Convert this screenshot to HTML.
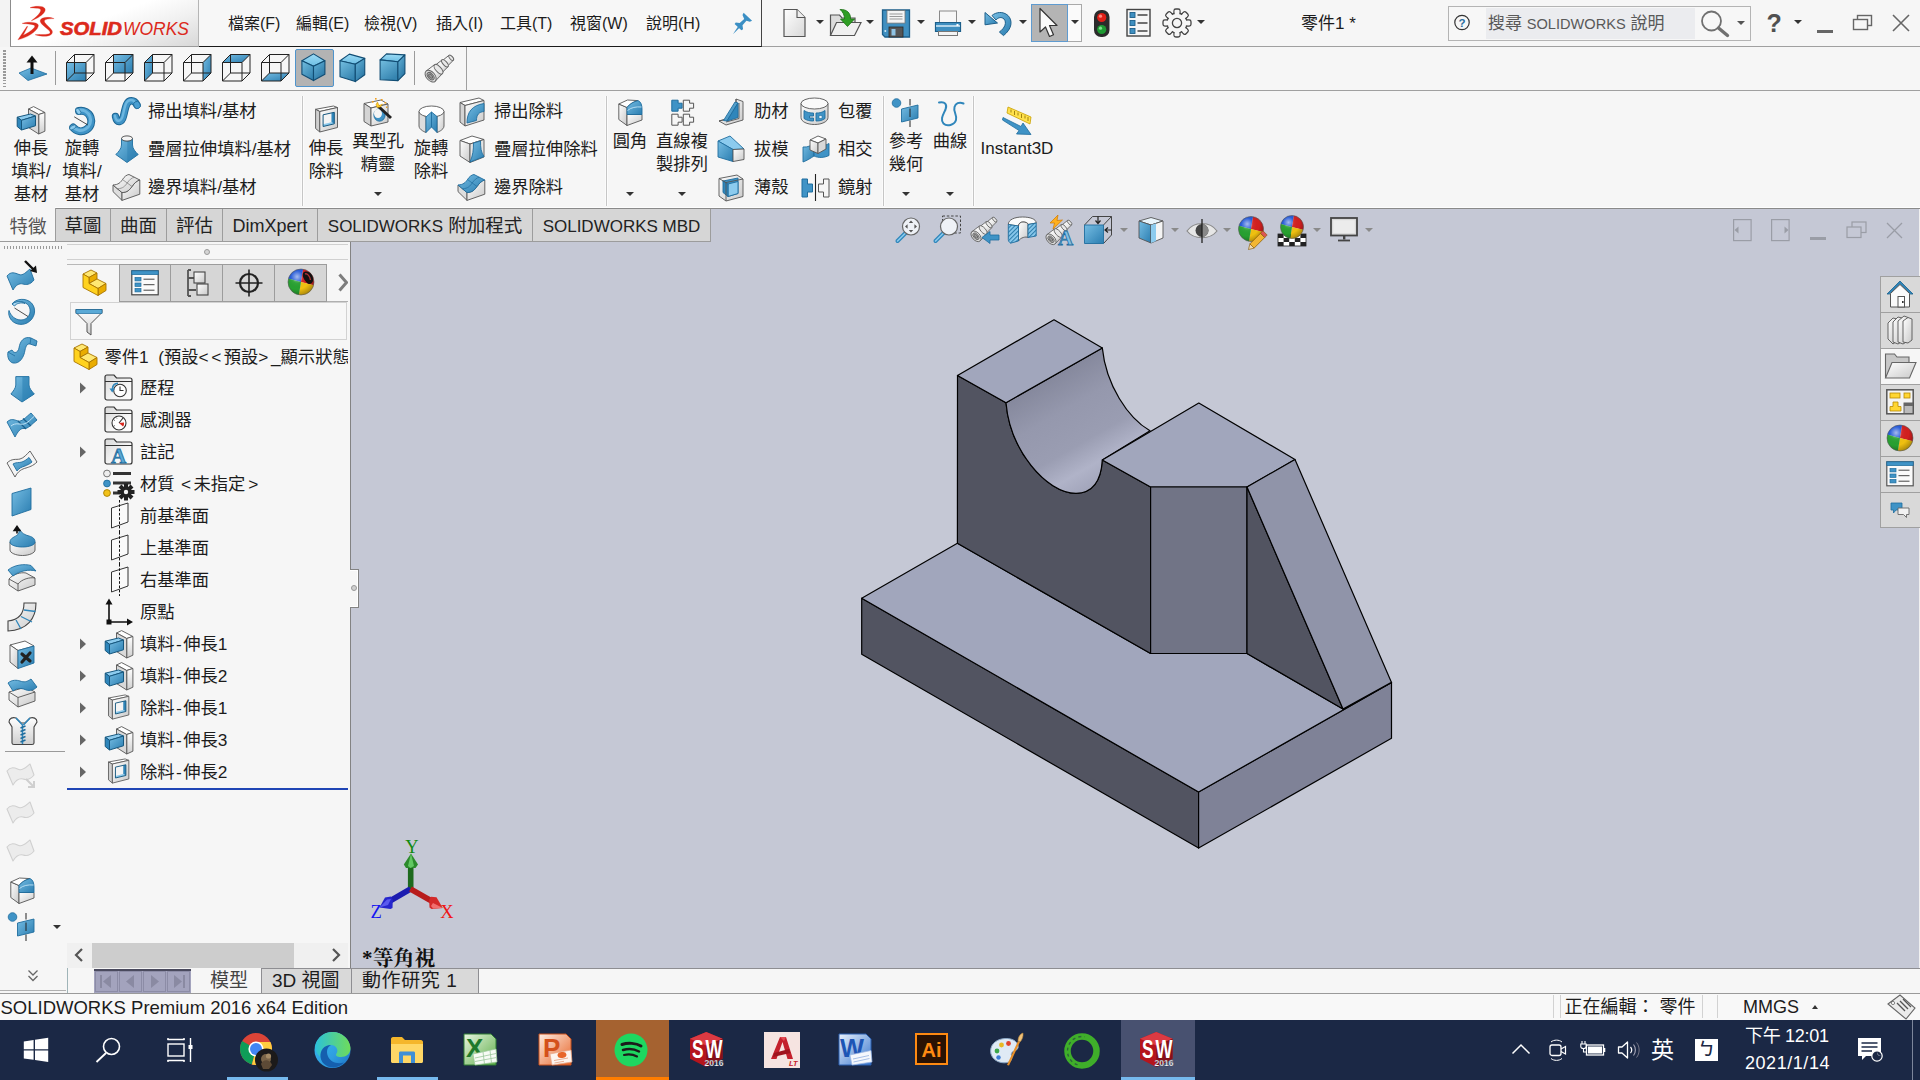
<!DOCTYPE html>
<html lang="zh-Hant">
<head>
<meta charset="utf-8">
<title>SOLIDWORKS</title>
<style>
*{box-sizing:border-box;margin:0;padding:0}
html,body{width:1920px;height:1080px;overflow:hidden;background:#f6f6f6}
body{position:relative;font-family:"Liberation Sans","Noto Sans CJK TC",sans-serif;color:#1c1c1c;font-size:17px}
.abs{position:absolute}
.t{position:absolute;white-space:nowrap;line-height:24px;height:24px}
.c{transform:translateX(-50%);text-align:center}
svg{position:absolute;overflow:visible}
.dd{position:absolute;width:0;height:0;border-left:4px solid transparent;border-right:4px solid transparent;border-top:4.5px solid #333}
/* title bar */
#logo{left:10px;top:0;width:189px;height:47px;background:linear-gradient(160deg,#ffffff 0%,#ffffff 45%,#f0f0f0 70%,#d8d8d8 100%);border-left:1px solid #8c8c8c;border-bottom:1px solid #9a9a9a;border-right:1px solid #b5b5b5}
#leftedge{left:0;top:0;width:10px;height:47px;background:#f3f3f3}
#menubar{left:199px;top:0;width:563px;height:47px;background:#f7f7f7;border-bottom:1.5px solid #1a1a1a;border-right:1.5px solid #444}
.menu{font-size:16px;top:12px}
#titleline{left:762px;top:46px;width:1158px;height:1px;background:#a0a0a0}
#viewbarline{left:0;top:90px;width:1920px;height:1px;background:#a0a0a0}
#viewbar-r{left:466px;top:47px;width:1px;height:43px;background:#a0a0a0}
.sep{position:absolute;width:1px;background:#c6c6c6;box-shadow:1px 0 0 #fcfcfc,-1px 0 0 #fbfbfb}
/* ribbon */
.rb{font-size:17px}
/* tabs */
.tab{position:absolute;top:209px;height:33px;background:#d6d6d6;border:1px solid #9c9c9c;border-top:none;border-left:none;font-size:18.5px;line-height:33px;white-space:nowrap;text-align:center;color:#222}
/* viewport */
#viewport{left:351px;top:209px;width:1569px;height:759px;background:#c5c8d5}
/* tree */
.tr{font-size:17.3px;left:140px}
/* taskbar */
#taskbar{left:0;top:1020px;width:1920px;height:60px;background:#1b2845}
</style>
</head>
<body>

<!-- title -->
<div id="leftedge" class="abs"></div>
<div id="logo" class="abs"></div>
<svg style="left:0;top:0" width="200" height="47" viewBox="0 0 200 47">
<g fill="#dc2a1c" stroke="#dc2a1c" stroke-width="0.3" stroke-linejoin="round">
<path d="M30,7.7 C33,6.3 39,5.8 42.4,6.8 C44.5,7.5 45.5,8.8 45.1,10.5 C44.5,13 41,16 37.3,18 C35.5,19 33,20.2 31.3,20.7 C33.5,19.2 35.5,17.5 37,16 C39.5,13.5 41,11.5 40.7,9.8 C40.3,8.5 38,8.3 37,8.2 C34.5,8 32,7.9 30,7.7 Z"/>
<path d="M22.1,23.4 C25,22.3 31,21.5 35.6,23 C37.5,23.7 38.6,24.5 38.3,26 C37.8,29 34.5,31.8 31.3,34.1 C27,37 22,38.8 17.9,39.8 L27,26.2 L27.7,26.5 L23.2,35.3 C27,33.8 31.5,30.5 33.9,28.1 C35,26.8 35,25.8 34.2,25.2 C32.5,24.2 28,24 22.1,23.4 Z"/>
<path d="M54.1,18.6 C51,17.3 46,16.8 42.8,18.1 C40.5,19 39.8,20.5 40.4,22 C41.5,24.5 45,27 48.3,29.8 C50,31.3 50.5,32.5 49.8,33.3 C48.5,34.6 44,34.6 35.1,34.7 C41,36.5 47,36.8 50,35.3 C52.5,34 52.8,32 52,30.5 C50.5,27.8 46.5,25 44.8,22.5 C44,21.2 44.3,20.2 45.8,19.6 C48,18.8 51,18.7 54.1,18.6 Z"/>
</g>
<text x="60" y="35.3" font-family="'Liberation Sans',sans-serif" font-size="18.5" font-style="italic" fill="#dc2a1c"><tspan font-weight="700" stroke="#dc2a1c" stroke-width="0.6" textLength="62" lengthAdjust="spacingAndGlyphs">SOLID</tspan><tspan dx="1" textLength="66" lengthAdjust="spacingAndGlyphs">WORKS</tspan></text>
</svg>
<div id="menubar" class="abs"></div>
<div class="t menu" style="left:228px">檔案(F)</div>
<div class="t menu" style="left:296px">編輯(E)</div>
<div class="t menu" style="left:364px">檢視(V)</div>
<div class="t menu" style="left:436px">插入(I)</div>
<div class="t menu" style="left:500px">工具(T)</div>
<div class="t menu" style="left:570px">視窗(W)</div>
<div class="t menu" style="left:646px">說明(H)</div>
<svg style="left:729.5px;top:10px" width="25" height="27" viewBox="0 0 22 24"><g fill="#3b8fc4"><path d="M12,2.5 L19.5,9.5 L17.5,10.5 L14.5,9.5 L11,13.5 L11.5,17 L10,18 L4,12.5 L5,11 L8.5,11.5 L12.5,8 L11,4.5 Z"/><path d="M7.3,14.2 L8.6,15.5 L2.5,21.5 Z"/></g></svg>
<div id="titleline" class="abs"></div>
<svg style="left:780px;top:6px" width="30" height="34" viewBox="0 0 30 34"><defs><linearGradient id="gpaper" x1="0" y1="0" x2="1" y2="1"><stop offset="0" stop-color="#ffffff"/><stop offset="1" stop-color="#d8d8d8"/></linearGradient></defs><path d="M4,3.5 h13 l8,8 v19 h-21 z" fill="url(#gpaper)" stroke="#555" stroke-width="1.2"/><path d="M17,3.5 v8 h8" fill="#eee" stroke="#555" stroke-width="1.1"/></svg>
<div class="dd" style="left:815.5px;top:20px;border-top-color:#333"></div>
<svg style="left:828px;top:6px" width="36" height="34" viewBox="0 0 36 34"><path d="M2.5,29.5 V9 h9 l2.5,3 h13 v5" fill="#dcdcdc" stroke="#555" stroke-width="1.2"/><path d="M2.5,29.5 L8.5,16.5 H33 L26.5,29.5 Z" fill="#f0f0f0" stroke="#555" stroke-width="1.2"/><path d="M12,3.5 C19,3 23,7.5 22.5,13 L26.5,13 L19.5,20.5 L12.5,13 L16.5,13 C16.5,9 15,6 12,3.5 Z" fill="#2f9e24" stroke="#1c7014" stroke-width="0.8"/></svg>
<div class="dd" style="left:866px;top:20px;border-top-color:#333"></div>
<svg style="left:880px;top:6px" width="32" height="34" viewBox="0 0 32 34"><path d="M2.5,4 h27 v27 h-24.5 l-2.5,-2.5 z" fill="#3f8fc0" stroke="#1d5f8a" stroke-width="1.3"/><rect x="7" y="4.6" width="18" height="12.5" fill="#f4f4f4" stroke="#777" stroke-width="0.8"/><path d="M9.5,8 h13 M9.5,10.5 h13 M9.5,13 h13" stroke="#999" stroke-width="1"/><rect x="9" y="21" width="14" height="10" fill="#555" stroke="#2a2a2a" stroke-width="0.8"/><rect x="11.5" y="23" width="4" height="6.5" fill="#8fc3e3"/><circle cx="5.3" cy="25" r="1" fill="#cfe6f4"/></svg>
<div class="dd" style="left:917px;top:20px;border-top-color:#333"></div>
<svg style="left:931.5px;top:4.8px" width="32" height="34" viewBox="0 0 32 34"><rect x="7.5" y="6" width="17" height="12" fill="#f7f7f7" stroke="#8a8a8a" stroke-width="1"/><path d="M3.5,17.5 h25 v9 h-25 z" fill="#3f8fc0" stroke="#1d5f8a" stroke-width="1.2"/><path d="M4,21 h24" stroke="#cfe6f4" stroke-width="1.6"/><rect x="6.5" y="26.5" width="19" height="4" fill="#f4f4f4" stroke="#777" stroke-width="1"/><rect x="24.5" y="19" width="2" height="2" fill="#fff"/></svg>
<div class="dd" style="left:968px;top:20px;border-top-color:#333"></div>
<svg style="left:983px;top:6px" width="32" height="34" viewBox="0 0 32 34"><g fill="url(#gb)" stroke="#1d5f8a" stroke-width="1" stroke-linejoin="round"><path d="M9,9.5 C13,6 20,5 25,9.5 C30,14.5 29,23 20.5,29.6 L16.4,26 C22,22 24,16.5 21,13 C18.5,10.5 15,11.5 13,14 Z"/><path d="M2,6.5 L2,18.8 L14.5,17 Z"/></g></svg>
<div class="dd" style="left:1019px;top:20px;border-top-color:#333"></div>
<div class="abs" style="left:1031px;top:4px;width:37px;height:38px;background:#b4b4b4;border:1px solid #5f9bd0"></div>
<div class="abs" style="left:1068px;top:4px;width:14px;height:38px;background:#fafafa;border:1px solid #a9a9a9;border-left:none"></div>
<svg style="left:1031px;top:4px" width="37" height="38" viewBox="0 0 37 38"><path d="M9,4.5 L9,28 L14.5,23 L18.5,32.5 L22.5,30.8 L18.5,21.5 L26,21.5 Z" fill="#fafafa" stroke="#333" stroke-width="1.2" stroke-linejoin="round"/></svg>
<div class="dd" style="left:1071px;top:20px;border-top-color:#333"></div>
<svg style="left:1092px;top:9px" width="20" height="30" viewBox="0 0 20 30"><rect x="2" y="1" width="15.5" height="27" rx="7" fill="#2b2b2b"/><circle cx="9.7" cy="8.5" r="4.6" fill="#e02018"/><circle cx="8.5" cy="7.2" r="1.6" fill="#ff8a80"/><circle cx="9.7" cy="20.5" r="4.6" fill="#1e9a32"/><circle cx="8.5" cy="19.2" r="1.6" fill="#7fe08f"/></svg>
<svg style="left:1125px;top:8px" width="28" height="30" viewBox="0 0 28 30"><rect x="2" y="1.5" width="23" height="26.5" fill="#f6f6f6" stroke="#444" stroke-width="1.4"/><g fill="#3f8fc0" stroke="#1d5f8a" stroke-width="0.9"><rect x="5" y="4.5" width="5" height="5"/><rect x="5" y="12.5" width="5" height="5"/><rect x="5" y="20.5" width="5" height="5"/></g><path d="M12.5,7 h10 M12.5,15 h10 M12.5,23 h10" stroke="#444" stroke-width="1.3"/></svg>
<svg style="left:1162px;top:8px" width="30" height="30" viewBox="-15 -15 30 30"><rect x="-3" y="-14" width="6" height="6" rx="1.8" fill="#f6f6f6" stroke="#444" stroke-width="1.3" transform="rotate(0.0)"/><rect x="-3" y="-14" width="6" height="6" rx="1.8" fill="#f6f6f6" stroke="#444" stroke-width="1.3" transform="rotate(45.0)"/><rect x="-3" y="-14" width="6" height="6" rx="1.8" fill="#f6f6f6" stroke="#444" stroke-width="1.3" transform="rotate(90.0)"/><rect x="-3" y="-14" width="6" height="6" rx="1.8" fill="#f6f6f6" stroke="#444" stroke-width="1.3" transform="rotate(135.0)"/><rect x="-3" y="-14" width="6" height="6" rx="1.8" fill="#f6f6f6" stroke="#444" stroke-width="1.3" transform="rotate(180.0)"/><rect x="-3" y="-14" width="6" height="6" rx="1.8" fill="#f6f6f6" stroke="#444" stroke-width="1.3" transform="rotate(225.0)"/><rect x="-3" y="-14" width="6" height="6" rx="1.8" fill="#f6f6f6" stroke="#444" stroke-width="1.3" transform="rotate(270.0)"/><rect x="-3" y="-14" width="6" height="6" rx="1.8" fill="#f6f6f6" stroke="#444" stroke-width="1.3" transform="rotate(315.0)"/><circle r="10" fill="#f6f6f6" stroke="#444" stroke-width="1.3"/><rect x="-2.3" y="-12.6" width="4.6" height="5" fill="#f6f6f6" transform="rotate(0.0)"/><rect x="-2.3" y="-12.6" width="4.6" height="5" fill="#f6f6f6" transform="rotate(45.0)"/><rect x="-2.3" y="-12.6" width="4.6" height="5" fill="#f6f6f6" transform="rotate(90.0)"/><rect x="-2.3" y="-12.6" width="4.6" height="5" fill="#f6f6f6" transform="rotate(135.0)"/><rect x="-2.3" y="-12.6" width="4.6" height="5" fill="#f6f6f6" transform="rotate(180.0)"/><rect x="-2.3" y="-12.6" width="4.6" height="5" fill="#f6f6f6" transform="rotate(225.0)"/><rect x="-2.3" y="-12.6" width="4.6" height="5" fill="#f6f6f6" transform="rotate(270.0)"/><rect x="-2.3" y="-12.6" width="4.6" height="5" fill="#f6f6f6" transform="rotate(315.0)"/><circle r="4.6" fill="#f6f6f6" stroke="#444" stroke-width="1.3"/></svg>
<div class="dd" style="left:1197px;top:20px;border-top-color:#333"></div>
<div class="t" style="left:1301px;top:12px;font-size:17px">零件1 *</div>
<div class="abs" style="left:1448px;top:6px;width:303px;height:35px;background:#f7f7f7;border:1px solid #b4b4b4"></div>
<div class="abs" style="left:1486px;top:8px;width:209px;height:31px;background:#ebecef"></div>
<svg style="left:1453px;top:13px" width="18" height="18" viewBox="0 0 18 18"><circle cx="9" cy="9.5" r="7.2" fill="none" stroke="#333" stroke-width="1.2"/><text x="9" y="13.6" text-anchor="middle" font-family="'Liberation Sans',sans-serif" font-weight="700" font-size="11.5" fill="#2b6ea0">?</text></svg>
<div class="t" style="left:1488px;top:12px;font-size:17px;color:#595959">搜尋 <span style="font-size:14.6px">SOLIDWORKS</span> 說明</div>
<svg style="left:1698px;top:9px" width="36" height="30" viewBox="0 0 36 30"><circle cx="13.5" cy="12" r="9.5" fill="#f7f7f7" stroke="#707070" stroke-width="1.8"/><path d="M20.5,19 L29.5,26.5" stroke="#707070" stroke-width="3.4" stroke-linecap="round"/></svg>
<div class="dd" style="left:1737px;top:21px;border-top-color:#555"></div>
<div class="t" style="left:1766.5px;top:11px;font-size:25px;font-weight:700;color:#505050">?</div>
<div class="dd" style="left:1794px;top:20px;border-top-color:#333"></div>
<div class="abs" style="left:1816.5px;top:29.5px;width:16.5px;height:3px;background:#666"></div>
<svg style="left:1851px;top:13px" width="24" height="20" viewBox="0 0 24 20"><rect x="6.5" y="2.5" width="14" height="10" fill="none" stroke="#666" stroke-width="1.4"/><rect x="2.5" y="6.5" width="14" height="10" fill="#f6f6f6" stroke="#666" stroke-width="1.4"/></svg>
<svg style="left:1891px;top:13px" width="20" height="20" viewBox="0 0 20 20"><path d="M2,2 L18,18 M18,2 L2,18" stroke="#666" stroke-width="1.6"/></svg>
<!-- viewbar -->
<svg width="0" height="0" style="left:0;top:0"><defs>
<linearGradient id="gb" x1="0" y1="0" x2="1" y2="1"><stop offset="0" stop-color="#76bde3"/><stop offset="1" stop-color="#2a7db0"/></linearGradient>
<linearGradient id="gbv" x1="0" y1="0" x2="0" y2="1"><stop offset="0" stop-color="#7cc4ea"/><stop offset="1" stop-color="#2f86bb"/></linearGradient>
<linearGradient id="gg" x1="0" y1="0" x2="1" y2="1"><stop offset="0" stop-color="#ffffff"/><stop offset="1" stop-color="#c9c9c9"/></linearGradient>
<linearGradient id="ggv" x1="0" y1="0" x2="0" y2="1"><stop offset="0" stop-color="#ffffff"/><stop offset="1" stop-color="#cfcfcf"/></linearGradient>
<linearGradient id="gfold" x1="0" y1="0" x2="1" y2="1"><stop offset="0" stop-color="#d8d8d8"/><stop offset="0.6" stop-color="#f6f6f6"/><stop offset="1" stop-color="#ffffff"/></linearGradient>
<linearGradient id="gscope" x1="0" y1="0" x2="1" y2="1"><stop offset="0" stop-color="#ffffff"/><stop offset="0.55" stop-color="#ededed"/><stop offset="1" stop-color="#b5b5b5"/></linearGradient>
<linearGradient id="gy" x1="0" y1="0" x2="1" y2="1"><stop offset="0" stop-color="#ffe14d"/><stop offset="1" stop-color="#e8a800"/></linearGradient>
<radialGradient id="gball" cx="0.35" cy="0.3" r="0.8"><stop offset="0" stop-color="#fff" stop-opacity="0.6"/><stop offset="0.3" stop-color="#fff" stop-opacity="0.05"/><stop offset="0.6" stop-color="#000" stop-opacity="0"/><stop offset="1" stop-color="#000" stop-opacity="0.35"/></radialGradient>
</defs></svg>
<div class="abs" style="left:3px;top:50px;width:3px;height:38px;background:repeating-linear-gradient(180deg,#9a9a9a 0 1.5px,transparent 1.5px 3px)"></div>
<svg style="left:16px;top:50px" width="34" height="36" viewBox="0 0 34 36"><path d="M3,23 L15,18 L31,24 L12,30.5 Z" fill="url(#gb)" stroke="#1f6d9e" stroke-width="0.8"/><path d="M16,24 V11" stroke="#111" stroke-width="3"/><path d="M16,5.5 L21.5,12.5 H10.5 Z" fill="#111"/></svg>
<div class="sep" style="left:55px;top:51px;height:34px;box-shadow:none;background:#9a9a9a"></div>
<svg style="left:64px;top:47px" width="34" height="42" viewBox="0 0 34 42"><path d="M2.5,15.5 H22 V34 H2.5 Z" fill="url(#gb)"/><g fill="none" stroke="#222" stroke-width="1"><path d="M2.5,15.5 H22 V34 H2.5 Z"/><path d="M10.5,7.5 H30 V26 H10.5 Z"/><path d="M2.5,15.5 l8,-8 M22,15.5 l8,-8 M2.5,34 l8,-8 M22,34 l8,-8"/></g></svg>
<svg style="left:103px;top:47px" width="34" height="42" viewBox="0 0 34 42"><path d="M10.5,7.5 H30 V26 H10.5 Z" fill="url(#gb)"/><g fill="none" stroke="#222" stroke-width="1"><path d="M2.5,15.5 H22 V34 H2.5 Z"/><path d="M10.5,7.5 H30 V26 H10.5 Z"/><path d="M2.5,15.5 l8,-8 M22,15.5 l8,-8 M2.5,34 l8,-8 M22,34 l8,-8"/></g></svg>
<svg style="left:142px;top:47px" width="34" height="42" viewBox="0 0 34 42"><path d="M2.5,15.5 L10.5,7.5 V26 L2.5,34 Z" fill="url(#gb)"/><g fill="none" stroke="#222" stroke-width="1"><path d="M2.5,15.5 H22 V34 H2.5 Z"/><path d="M10.5,7.5 H30 V26 H10.5 Z"/><path d="M2.5,15.5 l8,-8 M22,15.5 l8,-8 M2.5,34 l8,-8 M22,34 l8,-8"/></g></svg>
<svg style="left:181px;top:47px" width="34" height="42" viewBox="0 0 34 42"><path d="M22,15.5 L30,7.5 V26 L22,34 Z" fill="url(#gb)"/><g fill="none" stroke="#222" stroke-width="1"><path d="M2.5,15.5 H22 V34 H2.5 Z"/><path d="M10.5,7.5 H30 V26 H10.5 Z"/><path d="M2.5,15.5 l8,-8 M22,15.5 l8,-8 M2.5,34 l8,-8 M22,34 l8,-8"/></g></svg>
<svg style="left:220px;top:47px" width="34" height="42" viewBox="0 0 34 42"><path d="M2.5,15.5 L10.5,7.5 H30 L22,15.5 Z" fill="url(#gb)"/><g fill="none" stroke="#222" stroke-width="1"><path d="M2.5,15.5 H22 V34 H2.5 Z"/><path d="M10.5,7.5 H30 V26 H10.5 Z"/><path d="M2.5,15.5 l8,-8 M22,15.5 l8,-8 M2.5,34 l8,-8 M22,34 l8,-8"/></g></svg>
<svg style="left:259px;top:47px" width="34" height="42" viewBox="0 0 34 42"><path d="M2.5,34 L10.5,26 H30 L22,34 Z" fill="url(#gb)"/><g fill="none" stroke="#222" stroke-width="1"><path d="M2.5,15.5 H22 V34 H2.5 Z"/><path d="M10.5,7.5 H30 V26 H10.5 Z"/><path d="M2.5,15.5 l8,-8 M22,15.5 l8,-8 M2.5,34 l8,-8 M22,34 l8,-8"/></g></svg>
<div class="abs" style="left:295px;top:49px;width:39px;height:38px;background:#b3b3b3;border:1px solid #4f94cc;border-radius:2px"></div>
<svg style="left:0;top:0" width="470" height="92" viewBox="0 0 470 92"><defs><linearGradient id="ct" x1="0" y1="0" x2="0" y2="1"><stop offset="0" stop-color="#9ddcf6"/><stop offset="1" stop-color="#6cbde3"/></linearGradient><linearGradient id="cl" x1="0" y1="0" x2="0.6" y2="1"><stop offset="0" stop-color="#74bee0"/><stop offset="1" stop-color="#3584b0"/></linearGradient><linearGradient id="cr" x1="0" y1="0" x2="0.6" y2="1"><stop offset="0" stop-color="#66b4da"/><stop offset="1" stop-color="#2a76a3"/></linearGradient></defs>
<g stroke="#114d74" stroke-width="1.1" stroke-linejoin="round"><path d="M313.5,53.9 L324.9,60.8 L313.5,66.3 L301.9,60.8 Z" fill="url(#ct)"/><path d="M301.9,60.8 L313.5,66.3 V80.6 L301.9,74.2 Z" fill="url(#cl)"/><path d="M324.9,60.8 L313.5,66.3 V80.6 L324.9,74.2 Z" fill="url(#cr)"/>
<path d="M340,60.8 L349.4,54.1 L364.75,58.4 L355.3,64.3 Z" fill="url(#ct)"/><path d="M340,60.8 L355.3,64.3 V81.6 L340,76.7 Z" fill="url(#cl)"/><path d="M355.3,64.3 L364.75,58.4 V74.7 L355.3,81.6 Z" fill="url(#cr)"/>
<path d="M380.1,59.9 L386.5,53.9 L404.9,54.9 L397.9,61.8 Z" fill="url(#ct)"/><path d="M380.1,59.9 L397.9,61.8 V80.6 L380.1,79.7 Z" fill="url(#cl)"/><path d="M397.9,61.8 L404.9,54.9 V73.7 L397.9,80.6 Z" fill="url(#cr)"/></g></svg>
<div class="sep" style="left:414px;top:51px;height:34px;box-shadow:none;background:#9a9a9a"></div>
<svg style="left:424px;top:51px" width="32" height="32" viewBox="0 0 29 29"><g transform="translate(0,2.5)" stroke="#666" stroke-width="0.9" stroke-linejoin="round"><path d="M16.8,6.1 L22.6,1.4 L26.6,5.9 L21.3,11.2 Z" fill="url(#gscope)"/><ellipse cx="24.6" cy="3.6" rx="1.4" ry="3.0" transform="rotate(-41.8 24.6 3.6)" fill="#e8e8e8"/><path d="M10.0,10.5 L16.3,5.6 L21.8,11.7 L16.1,17.4 Z" fill="url(#gscope)"/><ellipse cx="19.0" cy="8.6" rx="1.8" ry="4.1" transform="rotate(-41.8 19.0 8.6)" fill="#e8e8e8"/><path d="M1.9,15.7 L9.5,9.9 L16.7,18.0 L10.1,24.9 Z" fill="url(#gscope)"/><ellipse cx="13.1" cy="14.0" rx="2.4" ry="5.4" transform="rotate(-41.8 13.1 14.0)" fill="#e8e8e8"/><ellipse cx="6.0" cy="20.3" rx="3.9" ry="6.2" transform="rotate(-41.8 6.0 20.3)" fill="#dcdcdc"/><ellipse cx="6.0" cy="20.3" rx="2.3" ry="3.9" transform="rotate(-41.8 6.0 20.3)" fill="#bdbdbd"/><ellipse cx="6.0" cy="20.3" rx="1.2" ry="2.3" transform="rotate(-41.8 6.0 20.3)" fill="#999"/></g></svg>
<div id="viewbar-r" class="abs"></div>
<div id="viewbarline" class="abs"></div>
<!-- viewport -->
<div id="viewport" class="abs"></div>
<div class="abs" style="left:349px;top:242px;width:1px;height:726px;background:#ffffff"></div>
<div class="abs" style="left:350px;top:242px;width:1px;height:726px;background:#838383"></div>
<div class="abs" style="left:1919px;top:209px;width:1px;height:759px;background:#f0f0f0"></div>
<svg id="model" width="1569" height="759" viewBox="351 209 1569 759" style="left:351px;top:209px">
<defs>
<linearGradient id="cyl" gradientUnits="userSpaceOnUse" x1="1030" y1="375" x2="1098" y2="493">
<stop offset="0" stop-color="#808397"/><stop offset="0.35" stop-color="#9598ad"/><stop offset="0.62" stop-color="#9a9db2"/><stop offset="0.8" stop-color="#b0b3c8"/><stop offset="1" stop-color="#9da0b6"/>
</linearGradient>
</defs>
<g stroke="#000" stroke-width="1.2" stroke-linejoin="round">
<polygon points="861.7,598.2 861.7,654.2 1198.6,848.1 1198.6,792.1" fill="#525461"/>
<polygon points="1198.6,792.1 1198.6,848.1 1391.5,738.3 1391.5,682.4" fill="#7f8297"/>
<polygon points="861.7,598.2 957.4,543.3 1150.6,653.5 1247,653.5 1343,709 1391.5,682.4 1198.6,792.1" fill="#a1a6bc"/>
<path d="M957.5,375.4 L1006,402.7 C1010,450 1046,493 1076,493.3 C1092,493 1101,482 1102.3,460 L1150.6,487 L1150.6,653.5 L957.4,543.3 Z" fill="#525461"/>
<path d="M1006,402.7 L1102.3,347.9 C1106,385 1128,418 1150,430.8 L1102.3,460 C1101,482 1092,493 1076,493.3 C1046,493 1010,450 1006,402.7 Z" fill="url(#cyl)"/>
<polygon points="957.5,375.4 1054,319.8 1102.3,347.9 1006,402.7" fill="#a1a6bc"/>
<polygon points="1102.3,460 1198.8,403 1295,459.5 1247,487 1150.6,487" fill="#a1a6bc"/>
<polygon points="1150.6,487 1247,487 1247,653.5 1150.6,653.5" fill="#717486"/>
<polygon points="1247,487 1343,709 1247,653.5" fill="#525461"/>
<polygon points="1247,487 1295,459.5 1391.5,682.4 1343,709" fill="#9094a9"/>
</g>
<g>
<line x1="410.7" y1="889" x2="410.7" y2="866" stroke="#1e6a1e" stroke-width="5.6"/>
<polygon points="411,853.5 418,864.5 415.5,868 406,868 403.8,864.5" fill="#2c8a2c"/>
<polygon points="411,853.5 414,866 410.5,868 408,866" fill="#62c862"/>
<line x1="410.5" y1="889" x2="389" y2="901.5" stroke="#1c1cb0" stroke-width="5.6"/>
<polygon points="379.5,907.5 385,897.5 391,896.5 392.8,900 392.5,908 390.5,909" fill="#2626cc"/>
<polygon points="379.5,907.5 387,899.5 391,899 388,905" fill="#5a5aee"/>
<line x1="410.5" y1="889" x2="432.5" y2="901.5" stroke="#b81c1c" stroke-width="5.6"/>
<polygon points="442.8,908 436.5,897.2 431,896.8 429.2,900 429.5,907.5 431.5,909" fill="#d42a2a"/>
<polygon points="442.8,908 433,903 431,906 433,908.5" fill="#f07070"/>
<text x="405.3" y="852.8" font-family="'Liberation Serif',serif" font-size="18.5" fill="#118a11">Y</text>
<text x="370.5" y="918" font-family="'Liberation Serif',serif" font-size="18.5" fill="#1515f0">Z</text>
<text x="440.3" y="918" font-family="'Liberation Serif',serif" font-size="18.5" fill="#f01515">X</text>
</g>
</svg>
<div class="t" style="left:362px;top:946px;font-family:'Liberation Serif','Noto Serif CJK SC',serif;font-size:21px;font-weight:700;color:#111;line-height:24px">*等角視</div>
<svg style="left:894px;top:215px" width="30" height="30" viewBox="0 0 30 30"><path d="M11.5,18 L3.5,26" stroke="#2f86bb" stroke-width="4" stroke-linecap="round"/><path d="M11.5,18 L3.5,26" stroke="#8ccbee" stroke-width="1.6" stroke-linecap="round"/><circle cx="17" cy="11.5" r="8.5" fill="#eef1f6" stroke="#666" stroke-width="1.2"/><path d="M17,5.5 l2.2,2.6 h-4.4 z M17,17.5 l2.2,-2.6 h-4.4 z M11,11.5 l2.6,-2.2 v4.4 z M23,11.5 l-2.6,-2.2 v4.4 z" fill="#555"/></svg>
<svg style="left:932px;top:215px" width="30" height="30" viewBox="0 0 30 30"><rect x="10.5" y="1" width="18" height="17" fill="none" stroke="#444" stroke-width="1" stroke-dasharray="2.5 1.8"/><path d="M11.5,18 L3.5,26" stroke="#2f86bb" stroke-width="4" stroke-linecap="round"/><path d="M11.5,18 L3.5,26" stroke="#8ccbee" stroke-width="1.6" stroke-linecap="round"/><circle cx="17" cy="11.5" r="8.5" fill="#eef1f6" stroke="#666" stroke-width="1.2"/></svg>
<svg style="left:969px;top:215px" width="32" height="30" viewBox="0 0 32 30"><g transform="translate(1,1)" stroke="#666" stroke-width="0.9" stroke-linejoin="round"><path d="M16.8,6.1 L22.6,1.4 L26.6,5.9 L21.3,11.2 Z" fill="url(#gscope)"/><ellipse cx="24.6" cy="3.6" rx="1.4" ry="3.0" transform="rotate(-41.8 24.6 3.6)" fill="#e8e8e8"/><path d="M10.0,10.5 L16.3,5.6 L21.8,11.7 L16.1,17.4 Z" fill="url(#gscope)"/><ellipse cx="19.0" cy="8.6" rx="1.8" ry="4.1" transform="rotate(-41.8 19.0 8.6)" fill="#e8e8e8"/><path d="M1.9,15.7 L9.5,9.9 L16.7,18.0 L10.1,24.9 Z" fill="url(#gscope)"/><ellipse cx="13.1" cy="14.0" rx="2.4" ry="5.4" transform="rotate(-41.8 13.1 14.0)" fill="#e8e8e8"/><ellipse cx="6.0" cy="20.3" rx="3.9" ry="6.2" transform="rotate(-41.8 6.0 20.3)" fill="#dcdcdc"/><ellipse cx="6.0" cy="20.3" rx="2.3" ry="3.9" transform="rotate(-41.8 6.0 20.3)" fill="#bdbdbd"/><ellipse cx="6.0" cy="20.3" rx="1.2" ry="2.3" transform="rotate(-41.8 6.0 20.3)" fill="#999"/></g><path d="M30,20 H21 V16.5 L13,22.5 L21,28.5 V25 H30 Z" fill="#3f93c6" stroke="#1f6d9e" stroke-width="0.8"/></svg>
<svg style="left:1007px;top:216px" width="31" height="29" viewBox="0 0 31 29"><defs><pattern id="hat" width="3" height="3" patternUnits="userSpaceOnUse" patternTransform="rotate(45)"><rect width="3" height="3" fill="#8ccbee"/><rect width="1.1" height="3" fill="#2f7fae"/></pattern></defs><g stroke="#555" stroke-width="0.9" stroke-linejoin="round"><path d="M1.3,8.5 C1.3,3.5 8,1 15.5,1 C23,1 29.2,3 29.2,7 L21,8.5 C21,6.8 18.5,6 16,6 C13.5,6 11.5,7.5 11.5,10 Z" fill="#fbfbfb"/><path d="M11.5,10 C11.5,7.5 13.5,6 16,6 C18.5,6 21,6.8 21,8.5 V21.5 C19,20.3 13.5,21.5 11.5,25 Z" fill="url(#gg)"/></g><g stroke="#1f6d9e" stroke-width="0.9" stroke-linejoin="round"><path d="M1.3,8.5 L11.5,10 V25 L3.5,27.2 C2,26 1.3,25 1.3,23.5 Z" fill="url(#hat)"/><path d="M21,8.5 L29.2,7 V20 L21,21.5 Z" fill="url(#hat)"/></g></svg>
<svg style="left:1045px;top:214px" width="32" height="32" viewBox="0 0 32 32"><g transform="translate(0,5)" stroke="#666" stroke-width="0.9" stroke-linejoin="round"><path d="M16.8,6.1 L22.6,1.4 L26.6,5.9 L21.3,11.2 Z" fill="url(#gscope)"/><ellipse cx="24.6" cy="3.6" rx="1.4" ry="3.0" transform="rotate(-41.8 24.6 3.6)" fill="#e8e8e8"/><path d="M10.0,10.5 L16.3,5.6 L21.8,11.7 L16.1,17.4 Z" fill="url(#gscope)"/><ellipse cx="19.0" cy="8.6" rx="1.8" ry="4.1" transform="rotate(-41.8 19.0 8.6)" fill="#e8e8e8"/><path d="M1.9,15.7 L9.5,9.9 L16.7,18.0 L10.1,24.9 Z" fill="url(#gscope)"/><ellipse cx="13.1" cy="14.0" rx="2.4" ry="5.4" transform="rotate(-41.8 13.1 14.0)" fill="#e8e8e8"/><ellipse cx="6.0" cy="20.3" rx="3.9" ry="6.2" transform="rotate(-41.8 6.0 20.3)" fill="#dcdcdc"/><ellipse cx="6.0" cy="20.3" rx="2.3" ry="3.9" transform="rotate(-41.8 6.0 20.3)" fill="#bdbdbd"/><ellipse cx="6.0" cy="20.3" rx="1.2" ry="2.3" transform="rotate(-41.8 6.0 20.3)" fill="#999"/></g><path d="M5,9 L13,1 L12,6.5 L17.5,6 L8,15 L9.5,9 Z" fill="#ffb01f" stroke="#d07800" stroke-width="0.7"/><text x="13" y="31" font-family="'Liberation Serif',serif" font-weight="700" font-size="21" fill="#7fbfe6" stroke="#1f6d9e" stroke-width="0.8">A</text></svg>
<svg style="left:1083px;top:215px" width="30" height="30" viewBox="0 0 30 30"><g fill="none" stroke="#444" stroke-width="1"><path d="M1.5,10 L9.5,1.5 H28.5 V20 L20.5,28.5"/><path d="M28.5,1.5 L20.5,10"/></g><path d="M1.5,10 H20.5 V28.5 H1.5 Z" fill="url(#gb)" stroke="#1f6d9e" stroke-width="0.9" stroke-linejoin="round"/><path d="M15,1.5 V8 M12.5,5.5 L15,8.5 L17.5,5.5 M28.5,15 H22.5 M25,12.5 L22,15 L25,17.5" fill="none" stroke="#222" stroke-width="1.2"/></svg>
<div class="dd" style="left:1120px;top:228px;border-top-color:#8a8a8a"></div>
<svg style="left:1138px;top:216px" width="26" height="28" viewBox="0 0 26 28"><g stroke="#555" stroke-width="0.9" stroke-linejoin="round"><path d="M1,5 L13,1.5 L25,5 L13,9 Z" fill="#e8f4fb"/><path d="M1,5 L13,9 V27 L1,22 Z" fill="url(#gb)"/><path d="M13,9 L25,5 V22 L13,27 Z" fill="#f4f4f4"/></g><path d="M13,9 L18,7.4 V25 L13,27 Z" fill="#8ccbee" stroke="none"/></svg>
<div class="dd" style="left:1171px;top:228px;border-top-color:#8a8a8a"></div>
<svg style="left:1186px;top:219px" width="32" height="24" viewBox="0 0 32 24"><path d="M1,12 C8,2 24,2 31,12 C24,21 8,21 1,12 Z" fill="#e6e6e6" stroke="#8a8a8a" stroke-width="1.2"/><circle cx="16" cy="11.5" r="6.5" fill="#444"/><path d="M16,5 A6.5,6.5 0 0 1 16,18 Z" fill="#888"/><path d="M16,0 V24" stroke="#222" stroke-width="1.3"/></svg>
<div class="dd" style="left:1223px;top:228px;border-top-color:#8a8a8a"></div>
<svg style="left:1237px;top:214px" width="34" height="34" viewBox="0 0 34 34"><g transform="translate(14,15)"><clipPath id="cb1415"><circle r="12.5"/></clipPath><g clip-path="url(#cb1415)"><path d="M0,0 L-13.750000000000002,-3.75 L-12.5,-15.0 L2.5,-15.0 Z" fill="#1f55d6"/><path d="M0,0 L2.5,-15.0 L15.0,-15.0 L15.0,3.75 Z" fill="#d21f1f"/><path d="M0,0 L15.0,3.75 L15.0,15.0 L-2.5,15.0 Z" fill="#f0c010"/><path d="M0,0 L-2.5,15.0 L-15.0,15.0 L-13.750000000000002,-3.75 Z" fill="#27a030"/></g><circle r="12.5" fill="url(#gball)" stroke="#555" stroke-width="0.6"/></g><g transform="translate(15,32) rotate(-45)"><rect x="0" y="-3" width="15" height="6" fill="#f2b632" stroke="#8a5a00" stroke-width="0.7"/><path d="M0,-3 L-5,0 L0,3 Z" fill="#f0d9b0" stroke="#8a5a00" stroke-width="0.6"/><rect x="15" y="-3" width="3.5" height="6" fill="#d55" stroke="#8a5a00" stroke-width="0.6"/></g></svg>
<svg style="left:1277px;top:214px" width="32" height="34" viewBox="0 0 32 34"><g transform="translate(1,20)"><rect width="28" height="12" fill="#fff" stroke="#222" stroke-width="0.8"/><path d="M0,0 h5.6 v4 h-5.6 z M11.2,0 h5.6 v4 h-5.6 z M22.4,0 h5.6 v4 h-5.6 z M5.6,4 h5.6 v4 h-5.6 z M16.8,4 h5.6 v4 h-5.6 z M0,8 h5.6 v4 h-5.6 z M11.2,8 h5.6 v4 h-5.6 z M22.4,8 h5.6 v4 h-5.6 z" fill="#222"/></g><g transform="translate(15,13)"><clipPath id="cb1513"><circle r="11.5"/></clipPath><g clip-path="url(#cb1513)"><path d="M0,0 L-12.65,-3.4499999999999997 L-11.5,-13.799999999999999 L2.3000000000000003,-13.799999999999999 Z" fill="#1f55d6"/><path d="M0,0 L2.3000000000000003,-13.799999999999999 L13.799999999999999,-13.799999999999999 L13.799999999999999,3.4499999999999997 Z" fill="#d21f1f"/><path d="M0,0 L13.799999999999999,3.4499999999999997 L13.799999999999999,13.799999999999999 L-2.3000000000000003,13.799999999999999 Z" fill="#f0c010"/><path d="M0,0 L-2.3000000000000003,13.799999999999999 L-13.799999999999999,13.799999999999999 L-12.65,-3.4499999999999997 Z" fill="#27a030"/></g><circle r="11.5" fill="url(#gball)" stroke="#555" stroke-width="0.6"/></g></svg>
<div class="dd" style="left:1313px;top:228px;border-top-color:#8a8a8a"></div>
<svg style="left:1330px;top:217px" width="28" height="26" viewBox="0 0 28 26"><rect x="1" y="1" width="26" height="17.5" fill="#d9d9d9" stroke="#444" stroke-width="1.8"/><rect x="3.2" y="3.2" width="21.6" height="13" fill="#ececec"/><path d="M13,19 h2.4 v3.5 h-2.4 z" fill="#444"/><path d="M8,23.5 h12" stroke="#444" stroke-width="1.8"/></svg>
<div class="dd" style="left:1365px;top:228px;border-top-color:#8a8a8a"></div>
<svg style="left:1733px;top:219px" width="20" height="23" viewBox="0 0 20 23"><rect x="0.6" y="0.6" width="17.5" height="21" fill="none" stroke="#9a9da6" stroke-width="1.2"/><path d="M1.5,11 L5.5,7.5 V14.5 Z" fill="#9a9da6"/></svg>
<svg style="left:1771px;top:219px" width="20" height="23" viewBox="0 0 20 23"><rect x="0.6" y="0.6" width="17.5" height="21" fill="none" stroke="#9a9da6" stroke-width="1.2"/><path d="M17.5,11 L13.5,7.5 V14.5 Z" fill="#9a9da6"/></svg>
<div class="abs" style="left:1810px;top:237px;width:16px;height:3px;background:#9a9da6"></div>
<svg style="left:1846px;top:221px" width="22" height="20" viewBox="0 0 22 20"><rect x="6" y="1" width="14" height="10.5" fill="none" stroke="#9a9da6" stroke-width="1.2"/><rect x="1" y="6" width="14" height="10.5" fill="#c5c8d5" stroke="#9a9da6" stroke-width="1.2"/></svg>
<svg style="left:1886px;top:222px" width="18" height="18" viewBox="0 0 18 18"><path d="M1,1 L16,16 M16,1 L1,16" stroke="#9a9da6" stroke-width="1.3"/></svg>
<div class="abs" style="left:350px;top:569px;width:9px;height:39px;background:#f6f6f6;border:1px solid #838383;border-left:none;box-shadow:inset -1px 0 0 #fff,inset 0 -1px 0 #fff,inset 0 1px 0 #fff"></div>
<div class="abs" style="left:351px;top:585px;width:6px;height:6px;border-radius:3px;background:#d0d0d0;border:1px solid #999"></div>
<div class="abs" style="left:1880px;top:276px;width:40px;height:37px;background:#d9d9d9;border:1px solid #a0a0a0;border-right:none"></div>
<div class="abs" style="left:1880px;top:312px;width:40px;height:37px;background:#d9d9d9;border:1px solid #a0a0a0;border-right:none"></div>
<div class="abs" style="left:1880px;top:348px;width:40px;height:37px;background:#f6f6f6;border:1px solid #a0a0a0;border-right:none"></div>
<div class="abs" style="left:1880px;top:384px;width:40px;height:37px;background:#d9d9d9;border:1px solid #a0a0a0;border-right:none"></div>
<div class="abs" style="left:1880px;top:420px;width:40px;height:37px;background:#d9d9d9;border:1px solid #a0a0a0;border-right:none"></div>
<div class="abs" style="left:1880px;top:456px;width:40px;height:37px;background:#d9d9d9;border:1px solid #a0a0a0;border-right:none"></div>
<div class="abs" style="left:1880px;top:492px;width:40px;height:36px;background:#d9d9d9;border:1px solid #a0a0a0;border-right:none"></div>
<svg style="left:1885px;top:279px" width="30" height="30" viewBox="0 0 30 30"><path d="M15,2 L28,15 H25.5 L15,4.8 L4.5,15 H2 Z" fill="#2f86bb" stroke="#1a5f8c" stroke-width="0.8"/><path d="M5.5,14.5 L15,5.5 L24.5,14.5 V28 H5.5 Z" fill="#fafafa" stroke="#555" stroke-width="1"/><rect x="13" y="17.5" width="6.5" height="10.5" fill="#fff" stroke="#555" stroke-width="1"/><rect x="17" y="22" width="1.6" height="2" fill="#333"/></svg>
<svg style="left:1887px;top:315px" width="26" height="30" viewBox="0 0 26 30"><g stroke="#555" stroke-width="0.9" stroke-linejoin="round"><path d="M1,8 L6,3 L10,4 V26 L6,29 L1,24 Z" fill="url(#gg)"/><path d="M6,7 L11,2 L15,3 V26.5 L11,29 L6,27 Z" fill="url(#gg)"/><path d="M11,6 L17,1 L21,2.5 V26 L16,29 L11,27 Z" fill="url(#gg)"/><path d="M16,6 L21,2.5 L25,4 V25 L21,28 L16,27 Z" fill="url(#gg)"/></g></svg>
<svg style="left:1884px;top:352px" width="33" height="28" viewBox="0 0 33 28"><path d="M1.5,26 V2 H10.5 L13,5 H25 V11" fill="#c8c8c8" stroke="#666" stroke-width="1.1"/><path d="M1.5,26 L8,10.5 H32 L25.5,26 Z" fill="url(#gg)" stroke="#666" stroke-width="1.1"/></svg>
<svg style="left:1886px;top:389px" width="28" height="26" viewBox="0 0 28 26"><rect x="0.8" y="0.8" width="26.4" height="24" fill="#f4f4f4" stroke="#555" stroke-width="1.5"/><rect x="4" y="4" width="10" height="5" fill="#ffd633" stroke="#b98a00" stroke-width="0.8"/><rect x="18" y="4" width="6" height="5" fill="#ffd633" stroke="#b98a00" stroke-width="0.8"/><path d="M7,13 h5 v4.5 h3 v4.5 h-11 v-4.5 h3 z" fill="#ffd633" stroke="#b98a00" stroke-width="0.8"/><rect x="18" y="14" width="9" height="10.5" fill="#bbb" stroke="#555" stroke-width="0.9"/><rect x="18" y="14" width="9" height="3" fill="#666"/></svg>
<svg style="left:1885px;top:423px" width="30" height="30" viewBox="0 0 30 30"><g transform="translate(15,15)"><clipPath id="cb1515"><circle r="13"/></clipPath><g clip-path="url(#cb1515)"><path d="M0,0 L-14.3,-3.9 L-13,-15.6 L2.6,-15.6 Z" fill="#1f55d6"/><path d="M0,0 L2.6,-15.6 L15.6,-15.6 L15.6,3.9 Z" fill="#d21f1f"/><path d="M0,0 L15.6,3.9 L15.6,15.6 L-2.6,15.6 Z" fill="#f0c010"/><path d="M0,0 L-2.6,15.6 L-15.6,15.6 L-14.3,-3.9 Z" fill="#27a030"/></g><circle r="13" fill="url(#gball)" stroke="#555" stroke-width="0.6"/></g></svg>
<svg style="left:1886px;top:461px" width="28" height="26" viewBox="0 0 28 26"><rect x="0.8" y="0.8" width="26.4" height="24" fill="#fafafa" stroke="#555" stroke-width="1.2"/><rect x="0.8" y="0.8" width="26.4" height="3.6" fill="#3f93c6" stroke="#1f6d9e" stroke-width="0.8"/><g fill="#3f93c6" stroke="#1f6d9e" stroke-width="0.7"><rect x="4" y="7.5" width="6" height="3.4"/><rect x="4" y="13" width="6" height="3.4"/><rect x="4" y="18.5" width="6" height="3.4"/></g><path d="M12.5,9.2 h11 M12.5,14.7 h11 M12.5,20.2 h11" stroke="#444" stroke-width="1"/></svg>
<svg style="left:1890px;top:502px" width="20" height="17" viewBox="0 0 20 17"><path d="M1,1 H12 V8 H6 L3.5,11 V8 H1 Z" fill="#3f93c6" stroke="#1f6d9e" stroke-width="0.8"/><path d="M8,6 H19 V12.5 H16.5 V15.5 L13.5,12.5 H8 Z" fill="#f2f2f2" stroke="#666" stroke-width="0.9"/></svg>
<!-- ribbon -->
<div class="t rb c" style="left:31px;top:135.5px;font-size:17.3px;">伸長</div>
<div class="t rb c" style="left:31px;top:158.5px;font-size:17.3px;">填料/</div>
<div class="t rb c" style="left:31px;top:181.5px;font-size:17.3px;">基材</div>
<div class="t rb c" style="left:82px;top:135.5px;font-size:17.3px;">旋轉</div>
<div class="t rb c" style="left:82px;top:158.5px;font-size:17.3px;">填料/</div>
<div class="t rb c" style="left:82px;top:181.5px;font-size:17.3px;">基材</div>
<div class="t rb c" style="left:326px;top:135.5px;font-size:17.3px;">伸長</div>
<div class="t rb c" style="left:326px;top:158.5px;font-size:17.3px;">除料</div>
<div class="t rb c" style="left:378px;top:128.5px;font-size:17.3px;">異型孔</div>
<div class="t rb c" style="left:378px;top:151.5px;font-size:17.3px;">精靈</div>
<div class="t rb c" style="left:431px;top:135.5px;font-size:17.3px;">旋轉</div>
<div class="t rb c" style="left:431px;top:158.5px;font-size:17.3px;">除料</div>
<div class="t rb c" style="left:630px;top:128.5px;font-size:17.3px;">圓角</div>
<div class="t rb c" style="left:682px;top:128.5px;font-size:17.3px;">直線複</div>
<div class="t rb c" style="left:682px;top:151.5px;font-size:17.3px;">製排列</div>
<div class="t rb c" style="left:906px;top:128.5px;font-size:17.3px;">參考</div>
<div class="t rb c" style="left:906px;top:151.5px;font-size:17.3px;">幾何</div>
<div class="t rb c" style="left:950px;top:128.5px;font-size:17.3px;">曲線</div>
<div class="t rb c" style="left:1017px;top:136.5px;font-size:17px;">Instant3D</div>
<div class="t rb" style="left:148px;top:98.5px;font-size:17.3px;">掃出填料/基材</div>
<div class="t rb" style="left:148px;top:136.5px;font-size:17.3px;">疊層拉伸填料/基材</div>
<div class="t rb" style="left:148px;top:174.5px;font-size:17.3px;">邊界填料/基材</div>
<div class="t rb" style="left:494px;top:98.5px;font-size:17.3px;">掃出除料</div>
<div class="t rb" style="left:494px;top:136.5px;font-size:17.3px;">疊層拉伸除料</div>
<div class="t rb" style="left:494px;top:174.5px;font-size:17.3px;">邊界除料</div>
<div class="t rb" style="left:754px;top:98.5px;font-size:17.3px;">肋材</div>
<div class="t rb" style="left:754px;top:136.5px;font-size:17.3px;">拔模</div>
<div class="t rb" style="left:754px;top:174.5px;font-size:17.3px;">薄殼</div>
<div class="t rb" style="left:838px;top:98.5px;font-size:17.3px;">包覆</div>
<div class="t rb" style="left:838px;top:136.5px;font-size:17.3px;">相交</div>
<div class="t rb" style="left:838px;top:174.5px;font-size:17.3px;">鏡射</div>
<div class="dd" style="left:374px;top:192px;border-top-color:#333"></div>
<div class="dd" style="left:626px;top:192px;border-top-color:#333"></div>
<div class="dd" style="left:678px;top:192px;border-top-color:#333"></div>
<div class="dd" style="left:902px;top:192px;border-top-color:#333"></div>
<div class="dd" style="left:946px;top:192px;border-top-color:#333"></div>
<div class="sep" style="left:302px;top:96px;height:110px"></div>
<div class="sep" style="left:606px;top:96px;height:110px"></div>
<div class="sep" style="left:883px;top:96px;height:110px"></div>
<div class="sep" style="left:973px;top:96px;height:110px"></div>
<svg style="left:16px;top:105.5px" width="30" height="28" viewBox="0 0 30 28"><g stroke="#555" stroke-width="0.9" stroke-linejoin="round"><path d="M12.5,3 L17.6,0.6 L28.9,6.5 L22.7,8.5 Z" fill="#fff"/><path d="M22.7,8.5 L28.9,6.5 V25.2 L22.7,28 Z" fill="url(#ggv)"/><path d="M12.5,3 L22.7,8.5 V28 L12.5,21.5 Z" fill="#d9d9d9"/></g><g stroke="#17587f" stroke-width="1" stroke-linejoin="round"><path d="M1.2,11.2 L14.5,8 L19.5,10 L5.5,14.3 Z" fill="#8ccbee"/><path d="M1.2,11.2 L5.5,14.3 V24 L1.2,20.5 Z" fill="#2f86bb"/><path d="M5.5,14.3 L19.5,10 V19.75 L5.5,24 Z" fill="url(#gb)"/></g></svg>
<svg style="left:68px;top:105.5px" width="28" height="29" viewBox="0 0 28 29"><path d="M11,5 A10.2,10.2 0 1 1 5.2,21.5" fill="none" stroke="#1b6492" stroke-width="8" stroke-linecap="round"/><path d="M11,5 A10.2,10.2 0 1 1 5.2,21.5" fill="none" stroke="#3f93c6" stroke-width="6.2" stroke-linecap="round"/><path d="M11,5 A10.2,10.2 0 1 1 5.2,21.5" fill="none" stroke="#6db6df" stroke-width="3" stroke-linecap="round" transform="translate(-0.6,-0.8)"/><ellipse cx="10.3" cy="5.4" rx="2" ry="3.4" transform="rotate(-35 10.3 5.4)" fill="#8ccbee" stroke="#1b6492" stroke-width="0.6"/><ellipse cx="4.8" cy="21.4" rx="3.6" ry="1.8" transform="rotate(-30 4.8 21.4)" fill="#8ccbee" stroke="#1b6492" stroke-width="0.6"/><path d="M6.2,10.8 L19.9,19" stroke="#222" stroke-width="0.8"/></svg>
<svg style="left:111px;top:96.5px" width="30" height="28" viewBox="0 0 30 28"><path d="M4.5,19.5 C6,27 11,25.5 12.5,19 C14.5,11 15,3.8 20.5,3.8 C23.5,3.8 25,6 26,8" fill="none" stroke="#1b6492" stroke-width="7.4" stroke-linecap="round"/><path d="M4.5,19.5 C6,27 11,25.5 12.5,19 C14.5,11 15,3.8 20.5,3.8 C23.5,3.8 25,6 26,8" fill="none" stroke="#3f93c6" stroke-width="5.6000000000000005" stroke-linecap="round"/><path d="M4.5,19.5 C6,27 11,25.5 12.5,19 C14.5,11 15,3.8 20.5,3.8 C23.5,3.8 25,6 26,8" fill="none" stroke="#6db6df" stroke-width="2.4000000000000004" stroke-linecap="round" transform="translate(-0.6,-0.8)"/><ellipse cx="26" cy="8" rx="3.2" ry="3.7" transform="rotate(-30 26 8)" fill="#4a9fd2" stroke="#1b6492" stroke-width="0.7"/></svg>
<svg style="left:114.5px;top:135px" width="24" height="28" viewBox="0 0 24 28"><path d="M6.5,3.5 V10 C6.5,13.5 3.5,17 0.8,19.5 L12,27.5 L23.2,19.5 C20.5,17 17.5,13.5 17.5,10 V3.5 Z" fill="url(#gb)" stroke="#1f6d9e" stroke-width="0.9" stroke-linejoin="round"/><path d="M12.3,6 V27.3 L23.2,19.5 C20.5,17 17.5,13.5 17.5,10 V5 Z" fill="#2a7db0" opacity="0.45"/><ellipse cx="12" cy="3.5" rx="5.5" ry="2.6" fill="#f4f4f4" stroke="#444" stroke-width="0.9"/></svg>
<svg style="left:111.5px;top:174px" width="29" height="27" viewBox="0 0 29 27"><g stroke="#555" stroke-width="0.9" stroke-linejoin="round"><path d="M1,11 L10,18.6 V26.4 L1,17.6 Z" fill="#dedede"/><path d="M10,18.6 C15.5,18.3 17.5,16 20,12.5 C22.5,9 25,6.6 27.8,6 V20.2 L10,26.4 Z" fill="url(#gg)"/></g><path d="M1,11 C6.5,10.7 8.5,8.5 10.5,5.5 C12.5,2.5 14.5,0.9 17,0.5 L27.8,6 C25,6.6 22.5,9 20,12.5 C17.5,16 15.5,18.3 10,18.6 Z" fill="url(#gg)" stroke="#555" stroke-width="0.9" stroke-linejoin="round"/><path d="M5.5,14.8 C11,14.5 13,12.2 15.2,9 C17.4,5.8 19.6,3.8 22.4,3.3 M10.5,5.5 L20,12.5" fill="none" stroke="#777" stroke-width="0.7"/></svg>
<svg style="left:313.5px;top:105px" width="24" height="28" viewBox="0 0 24 28"><g stroke="#555" stroke-width="0.9" stroke-linejoin="round"><path d="M1.6,4.3 L19.5,1 L23.5,2.5 L5.8,6.5 Z" fill="#fff"/><path d="M1.6,4.3 L5.8,6.5 V27 L1.6,23.5 Z" fill="#cfcfcf"/><path d="M5.8,6.5 L23.5,2.5 V22.5 L5.8,27 Z" fill="url(#gg)"/></g><path d="M9.1,9.8 L17.5,7.9 V17.3 L9.1,19.3 Z" fill="#f4f4f4"/><path d="M17.5,7.9 L20.3,7.3 V18.8 L17.5,17.3 Z" fill="#2f86bb"/><path d="M9.1,19.3 L17.5,17.3 L20.3,18.8 L9.1,21.5 Z" fill="#8ccbee"/><path d="M9.1,9.8 L20.3,7.3 V18.8 L9.1,21.5 Z" fill="none" stroke="#17587f" stroke-width="1" stroke-linejoin="round"/></svg>
<svg style="left:363px;top:97px" width="31" height="30" viewBox="0 0 31 30"><g stroke="#555" stroke-width="0.9" stroke-linejoin="round"><path d="M1,6.5 L18,3 L25,7 L8,11 Z" fill="#fff"/><path d="M1,6.5 L8,11 V29 L1,24.5 Z" fill="#d4d4d4"/><path d="M8,11 L25,7 V25 L8,29 Z" fill="url(#gg)"/></g><ellipse cx="16.5" cy="18" rx="5.6" ry="6.2" fill="#3f93c6" stroke="#1f6d9e" stroke-width="0.9" stroke-linejoin="round"/><ellipse cx="15" cy="16.5" rx="4" ry="4.6" fill="#f4f4f4" stroke="none"/><path d="M16,8 L29,20 L27,22 L14,10 Z" fill="#222"/><path d="M14.5,5 L16,8.5 L19.5,7 L17.5,10 L14,10.5 L13,7.5 Z" fill="#ffcf2e" stroke="#c98a00" stroke-width="0.5"/><g fill="#f0a020"><rect x="9" y="4" width="1.6" height="1.6"/><rect x="12" y="1" width="1.6" height="1.6"/><rect x="18" y="2" width="1.6" height="1.6"/><rect x="21.5" y="5" width="1.6" height="1.6"/><rect x="23" y="9.5" width="1.4" height="1.4"/></g></svg>
<svg style="left:417.5px;top:105px" width="27" height="28" viewBox="0 0 27 28"><g stroke="#555" stroke-width="0.9" stroke-linejoin="round"><path d="M1,6.5 V21 C1,25 8,27.5 8,27.5 V12 Z" fill="#ddd"/><path d="M19,11.5 V27.5 C19,27.5 26,25 26,21 V6.5 Z" fill="url(#gg)"/><ellipse cx="13.5" cy="6.5" rx="12.5" ry="5.5" fill="#fff"/></g><path d="M8,12 L13.5,7 L19,11.5 V27.5 L13.5,22 L8,27.5 Z" fill="url(#gb)" stroke="#1f6d9e" stroke-width="0.9" stroke-linejoin="round"/><path d="M13.5,7 V22" stroke="#1f6d9e" stroke-width="0.9"/></svg>
<svg style="left:458.5px;top:96.5px" width="26" height="29" viewBox="0 0 26 29"><g stroke="#555" stroke-width="0.9" stroke-linejoin="round"><path d="M1,5.5 L20,1 L25,3.5 L6,8.5 Z" fill="#fff"/><path d="M1,5.5 L6,8.5 V29 L1,25 Z" fill="#d4d4d4"/><path d="M6,8.5 L25,3.5 V23 L6,29 Z" fill="url(#gg)"/></g><path d="M8,26 C8,15 13,8.5 25,6.5 V14.5 C20,15 17.5,17.5 17.5,23.5 Z" fill="url(#gb)" stroke="#1f6d9e" stroke-width="0.9" stroke-linejoin="round"/></svg>
<svg style="left:458.5px;top:134.5px" width="26" height="28" viewBox="0 0 26 28"><g stroke="#555" stroke-width="0.9" stroke-linejoin="round"><path d="M1,5.5 L13,1 L25,4.5 L11,9 Z" fill="#fff"/><path d="M1,5.5 L11,9 V27.5 L1,21 Z" fill="url(#gg)"/><path d="M11,9 L25,4.5 V22 L11,27.5 Z" fill="#e4e4e4"/></g><path d="M14.5,8 L21.5,6 C21.5,13 22,17 25,21.5 L11,27 C14,20 14.5,15 14.5,8 Z" fill="url(#gb)" stroke="#1f6d9e" stroke-width="0.9" stroke-linejoin="round"/></svg>
<svg style="left:457px;top:173.5px" width="29" height="27" viewBox="0 0 29 27"><g stroke="#555" stroke-width="0.9" stroke-linejoin="round"><path d="M1,11 L10,18.6 V26.4 L1,17.6 Z" fill="#dedede"/><path d="M10,18.6 C15.5,18.3 17.5,16 20,12.5 C22.5,9 25,6.6 27.8,6 V20.2 L10,26.4 Z" fill="url(#gg)"/></g><path d="M1,11 C6.5,10.7 8.5,8.5 10.5,5.5 C12.5,2.5 14.5,0.9 17,0.5 L27.8,6 C25,6.6 22.5,9 20,12.5 C17.5,16 15.5,18.3 10,18.6 Z" fill="url(#gb)" stroke="#1f6d9e" stroke-width="0.9" stroke-linejoin="round"/><path d="M5.5,14.8 C11,14.5 13,12.2 15.2,9 C17.4,5.8 19.6,3.8 22.4,3.3 M10.5,5.5 L20,12.5" fill="none" stroke="#1f6d9e" stroke-width="0.7"/></svg>
<svg style="left:617.5px;top:99px" width="25" height="27" viewBox="0 0 25 27"><g stroke="#555" stroke-width="0.9" stroke-linejoin="round"><path d="M0.8,5 L9,8.5 V26.5 L0.8,20.5 Z" fill="url(#gg)"/><path d="M9,15.5 H24 V21 L9,26.5 Z" fill="url(#gg)"/><path d="M0.8,5 L9.5,1 L20,1.6 C16,2.5 11.5,5 9,8.5 Z" fill="#fff"/></g><path d="M9,8.5 C11.5,5 16,2.5 20,1.6 C22.8,2.6 24,6 24,10 V15.5 H9 Z" fill="url(#gb)" stroke="#1f6d9e" stroke-width="0.9" stroke-linejoin="round"/><path d="M9.5,11.5 C13,8.5 18,7.5 23.5,8" fill="none" stroke="#bfe2f5" stroke-width="0.9"/></svg>
<svg style="left:670.5px;top:99px" width="23" height="27" viewBox="0 0 23 27"><path d="M0.8,1.2 h6.3 v3 h4 v5 h-4 v3 h-6.3 z" fill="#3f93c6" stroke="#1f6d9e" stroke-width="1"/><path d="M12.3,1.2 h6.3 v3 h4 v5 h-4 v3 h-6.3 z" fill="#f6f6f6" stroke="#555" stroke-width="1"/><path d="M0.8,15.2 h6.3 v3 h4 v5 h-4 v3 h-6.3 z" fill="#f6f6f6" stroke="#555" stroke-width="1"/><path d="M12.3,15.2 h6.3 v3 h4 v5 h-4 v3 h-6.3 z" fill="#f6f6f6" stroke="#555" stroke-width="1"/></svg>
<svg style="left:717.5px;top:97.5px" width="26" height="27" viewBox="0 0 26 27"><g stroke="#555" stroke-width="0.9" stroke-linejoin="round"><path d="M18,1 L25,3.5 V22 L8,27 L1,23 L18,18.5 Z" fill="url(#gg)"/><path d="M18,1 V18.5 L1,23" fill="none"/><path d="M21,5 V20.5 L8,24" fill="none"/></g><path d="M17,4 L20,5 L9,23 L5.5,22.5 Z" fill="url(#gb)" stroke="#1f6d9e" stroke-width="0.9" stroke-linejoin="round"/><path d="M20,5 V19.5 L9,23 Z" fill="#2f86bb" stroke="#1f6d9e" stroke-width="0.9" stroke-linejoin="round"/></svg>
<svg style="left:717px;top:135px" width="28" height="27" viewBox="0 0 28 27"><path d="M1,6 L13,1 L27,14 L16,14.5 Z" fill="#8ccbee" stroke="#1f6d9e" stroke-width="0.9" stroke-linejoin="round"/><path d="M1,6 L16,14.5 V26.5 L1,22 Z" fill="url(#gb)" stroke="#1f6d9e" stroke-width="0.9" stroke-linejoin="round"/><path d="M16,14.5 L27,14 V24.5 L16,26.5 Z" fill="url(#gg)" stroke="#555" stroke-width="0.9" stroke-linejoin="round"/></svg>
<svg style="left:718px;top:173.5px" width="26" height="27" viewBox="0 0 26 27"><g stroke="#555" stroke-width="0.9" stroke-linejoin="round"><path d="M1,4.5 L19,1 L25,5 V22.5 L8,27 L1,22 Z" fill="url(#gg)"/></g><path d="M5,7 L20,4 V19.5 L10,22.5 Z" fill="#3f93c6" stroke="#1f6d9e" stroke-width="0.9" stroke-linejoin="round"/><path d="M10,10 L20,7.5 V19.5 L10,22.5 Z" fill="#8ccbee" stroke="#1f6d9e" stroke-width="0.9" stroke-linejoin="round"/><path d="M5,7 L10,10 V22.5 L5,18.5 Z" fill="#2f86bb" stroke="#1f6d9e" stroke-width="0.9" stroke-linejoin="round"/><g stroke="#555" stroke-width="0.9" stroke-linejoin="round" fill="none"><path d="M1,4.5 L8,8.5 L25,5 M8,8.5 V27"/></g></svg>
<svg style="left:800px;top:96.5px" width="29" height="28" viewBox="0 0 29 28"><g stroke="#555" stroke-width="0.9" stroke-linejoin="round"><path d="M1,6.5 V20.5 C1,24.5 7,27.5 14.5,27.5 C22,27.5 28,24.5 28,20.5 V6.5 Z" fill="url(#gg)"/><ellipse cx="14.5" cy="6.5" rx="13.5" ry="5.5" fill="#fafafa"/></g><path d="M4,13.5 C7,15.5 10,16 13.5,16 V19 H9.5 V21 H13.5 V24 C10,24 7,23.5 4,21.5 Z M16,16 C20,16 22,15.5 25,13.5 V21.5 C22,23.5 20,24 16,24 Z" fill="#3f93c6" stroke="#1f6d9e" stroke-width="0.9" stroke-linejoin="round"/><path d="M19,18.5 h3 v3 h-3 z" fill="#eaf5fb" stroke="#1f6d9e" stroke-width="0.6"/></svg>
<svg style="left:801.5px;top:135px" width="28" height="27" viewBox="0 0 28 27"><path d="M1,12 C6,12.5 9,10.5 12,8 V21 C9,23 5,25.5 1,27 Z" fill="url(#gb)" stroke="#1f6d9e" stroke-width="0.9" stroke-linejoin="round"/><path d="M12,8 C17,11 22,11.5 27,8.5 V20.5 C22,23 16,23 12,21 Z" fill="#3f93c6" stroke="#1f6d9e" stroke-width="0.9" stroke-linejoin="round"/><g stroke="#555" stroke-width="0.9" stroke-linejoin="round"><path d="M8,5 L16,1 L24,4 L16,8 Z" fill="#fff"/><path d="M8,5 L16,8 V18.5 L8,15 Z" fill="url(#gg)"/><path d="M16,8 L24,4 V14 L16,18.5 Z" fill="#d9d9d9"/></g></svg>
<svg style="left:801px;top:173.5px" width="29" height="27" viewBox="0 0 29 27"><path d="M1,5 h5.5 v5 h5 v8 h-5 v5 h-5.5 z" fill="#3f93c6" stroke="#1f6d9e" stroke-width="1"/><path d="M28,5 h-5.5 v5 h-5 v8 h5 v5 h5.5 z" fill="#f6f6f6" stroke="#555" stroke-width="1"/><path d="M14.5,0 V27" stroke="#222" stroke-width="1.1"/></svg>
<svg style="left:891px;top:98px" width="28" height="30" viewBox="0 0 28 30"><circle cx="5.5" cy="5" r="4.3" fill="#3f93c6" stroke="#1f6d9e" stroke-width="0.8"/><path d="M10.5,11 L27,7 V20 L10.5,24 Z" fill="url(#gb)" stroke="#1f6d9e" stroke-width="0.9" stroke-linejoin="round"/><path d="M19,1 V7.5 M19,10.5 V19 M19,22.5 V29" stroke="#222" stroke-width="1"/></svg>
<svg style="left:936.5px;top:99.5px" width="28" height="27" viewBox="0 0 28 27"><path d="M2,2.5 C8,1 10.5,4.5 8.5,9.5 C6,15 3,19.5 6.5,23.5 C10,27 17.5,25 19,20 C20.5,15 16,12 17.5,7 C18.5,3.5 22,1.5 26.5,3.5" fill="none" stroke="#2f86bb" stroke-width="2" stroke-linecap="round"/></svg>
<svg style="left:1002px;top:106px" width="30" height="30" viewBox="0 0 30 30"><path d="M6,1 L29,11 L28,18 L5,7 Z" fill="#ffe14d" stroke="#c9a000" stroke-width="0.8"/><path d="M9,3.5 v3 M12.5,5 v4 M16,6.5 v3 M19.5,8 v4 M23,9.5 v3 M26,11 v4" stroke="#8a6d00" stroke-width="0.8"/><path d="M1,11.5 L19,20.5 L21,17 L29,28.5 L14.5,28 L17,24.5 L0.5,14 Z" fill="#3f93c6" stroke="#1f6d9e" stroke-width="0.8"/></svg>
<div class="abs" style="left:0;top:207px;width:1920px;height:1px;background:#fdfdfd"></div>
<div class="abs" style="left:0;top:208px;width:1920px;height:1px;background:#8a8a8a"></div>
<div class="abs" style="left:0;top:207px;width:55px;height:34px;background:#f6f6f6"></div>
<div class="t" style="left:9.5px;top:214.5px;font-size:18.5px;color:#555">特徵</div>
<div class="tab" style="left:56px;width:55px">草圖</div>
<div class="tab" style="left:111px;width:56px">曲面</div>
<div class="tab" style="left:167px;width:56px">評估</div>
<div class="tab" style="left:223px;width:95px"><span style="font-size:18px">DimXpert</span></div>
<div class="tab" style="left:318px;width:215px"><span style="font-size:17px">SOLIDWORKS</span> 附加程式</div>
<div class="tab" style="left:533px;width:178px"><span style="font-size:17px">SOLIDWORKS MBD</span></div>
<div class="abs" style="left:55px;top:208px;width:1px;height:33px;background:#9c9c9c"></div>
<div class="abs" style="left:0;top:241px;width:56px;height:1px;background:#9c9c9c"></div>
<!-- left toolbar -->
<div class="abs" style="left:4px;top:246px;width:60px;height:3px;background:repeating-linear-gradient(90deg,#9a9a9a 0 1.5px,transparent 1.5px 3px)"></div>
<svg style="left:6px;top:259px" width="34" height="32" viewBox="0 0 34 32"><path transform="translate(0,7)" d="M1,10 C5,5 9,7 13,8.5 C17,10 20,6 24,3 L28,14 C24,19 20,19 17,18 C13,17 10,19 7,24 Z" fill="url(#gb)" stroke="#1f6d9e" stroke-width="0.9" stroke-linejoin="round"/><path d="M19,2 L28,11" stroke="#111" stroke-width="2.4"/><path d="M31,14 L30,6.5 L24,12 Z" fill="#111"/></svg>
<svg style="left:7px;top:297px" width="30" height="30" viewBox="0 0 30 30"><path d="M5,7 C9,1.5 19,0.5 24.5,6 C30,12 28,22 20,26 C14,29 6,27 3,21 C1.5,18 1.5,15.5 2,13.5 C3.5,18.5 8,23 14,23 C20,23 24,18 23,12 C22,7 17,4 12,5 C9,5.7 7,6.5 5,7 Z" fill="url(#gb)" stroke="#1f6d9e" stroke-width="0.9" stroke-linejoin="round"/><path d="M5,7 C8,4.5 14,3.5 18,6.5 C14,5 9,6.5 7.5,9 Z" fill="#a9d9f2" stroke="#1f6d9e" stroke-width="0.9" stroke-linejoin="round"/><path d="M7.5,11 L21,19.5" stroke="#222" stroke-width="0.8"/></svg>
<svg style="left:6px;top:335px" width="32" height="30" viewBox="0 0 32 30"><path d="M2,17 L6,15 C8,19 12,18 13,13 C14,6 18,1 25,3 L31,6 L30,11 L24,9 C21,8.5 20,11 19,15 C18,22 14,29 7,28 C3,27 1,22 2,17 Z" fill="url(#gb)" stroke="#1f6d9e" stroke-width="0.9" stroke-linejoin="round"/><path d="M25,3 L24,9" stroke="#1f6d9e" stroke-width="0.8"/><path d="M2,17 L9,21" stroke="#1f6d9e" stroke-width="0.8"/></svg>
<svg style="left:9px;top:376px" width="27" height="27" viewBox="0 0 27 27"><path d="M6.8,0.6 H20 V9 C20,12 23,15.5 25.3,18 L13,26 L1.9,18 C4,15.5 6.8,12 6.8,9 Z" fill="url(#gb)" stroke="#1f6d9e" stroke-width="0.9" stroke-linejoin="round"/><path d="M13.4,0.6 V26 L25.3,18 C23,15.5 20,12 20,9 V0.6 Z" fill="#2a7fb2" opacity="0.55"/></svg>
<svg style="left:6px;top:411px" width="32" height="28" viewBox="0 0 32 28"><path d="M1,11 C5,7 9,9 12,10 C16,11 20,6 25,2 L31,9 C26,13 22,18 18,17.5 C15,17 12,20 9,26 Z" fill="url(#gb)" stroke="#1f6d9e" stroke-width="0.9" stroke-linejoin="round"/><path d="M12,10 L20,18 M17,7.5 L25,15" stroke="#1a5f8c" stroke-width="1.2"/><path d="M5,15 C10,11 14,14 18,13 C22,12 25,8 28,5.5" fill="none" stroke="#bfe2f5" stroke-width="1"/></svg>
<svg style="left:6px;top:449px" width="32" height="30" viewBox="0 0 32 30"><path d="M1,14 C6,9 10,11 14,10 C18,9 21,5 24,2 L31,13 C27,17 23,18 20,19 C16,20 12,22 9,28 Z" fill="#f4f4f4" stroke="#555" stroke-width="0.9" stroke-linejoin="round"/><path d="M7,15 C10,13 13,14 16,13 C19,12 21,10 23,8.5 L26,13 C24,15 21,16 19,17 C16,18 13,19 11,22 Z" fill="url(#gb)" stroke="#1f6d9e" stroke-width="0.9" stroke-linejoin="round"/></svg>
<svg style="left:11px;top:487px" width="22" height="30" viewBox="0 0 22 30"><path d="M1,6.5 L20,1 V22.5 L1,29 Z" fill="url(#gb)" stroke="#1f6d9e" stroke-width="0.9" stroke-linejoin="round"/></svg>
<svg style="left:9px;top:525px" width="28" height="32" viewBox="0 0 28 32"><g stroke="#555" stroke-width="0.9" stroke-linejoin="round"><path d="M1,17 V25 C1,28 7,30.5 13.5,30.5 C20,30.5 26,28 26,25 V17 Z" fill="url(#gg)"/></g><path d="M1,17 C1,13 6,12 9,9.5 C10.5,8 10,5 10.5,4 C12,8 16,10 20,11 C24,12 26,14 26,17 C26,20 20,22 13.5,22 C7,22 1,20 1,17 Z" fill="url(#gb)" stroke="#1f6d9e" stroke-width="0.9" stroke-linejoin="round"/><path d="M8,8.5 V4 M5.2,5.5 L8,1.5 L10.8,5.5 Z" stroke="#111" stroke-width="1.6" fill="#111"/></svg>
<svg style="left:7px;top:563px" width="30" height="30" viewBox="0 0 30 30"><g stroke="#555" stroke-width="0.9" stroke-linejoin="round"><path d="M2,16 C6,11 14,9 19,10 L28,15 V22 L11,28 L2,22 Z" fill="url(#gg)"/><path d="M2,16 L11,21 V28 M11,21 C15,16 23,14 28,15" fill="none"/></g><path d="M1,7 C7,2 17,0.5 24,2.5 L29,8 C22,6 12,8 6,13 Z" fill="url(#gb)" stroke="#1f6d9e" stroke-width="0.9" stroke-linejoin="round"/></svg>
<svg style="left:7px;top:602px" width="30" height="30" viewBox="0 0 30 30"><path d="M17,1 H29 C29,17 20,28 1,29 V19 C11,18 17,12 17,1 Z" fill="url(#gg)" stroke="#444" stroke-width="1.1"/><path d="M17,8 L28.5,9.5 M14,14.5 L25,20 M9,18 L14,27" stroke="#2f86bb" stroke-width="1.3"/></svg>
<svg style="left:9px;top:640px" width="26" height="30" viewBox="0 0 26 30"><g stroke="#555" stroke-width="0.9" stroke-linejoin="round"><path d="M1,5 L16,1 L25,6 L9,10.5 Z" fill="#fff"/><path d="M1,5 L9,10.5 V28.5 L1,22 Z" fill="url(#gg)"/></g><path d="M9,10.5 L25,6 V23 L9,28.5 Z" fill="url(#gb)" stroke="#1f6d9e" stroke-width="0.9" stroke-linejoin="round"/><path d="M13,14 L21,21 M21,13 L13,22" stroke="#222" stroke-width="3.2" stroke-linecap="round"/></svg>
<svg style="left:7px;top:678px" width="32" height="30" viewBox="0 0 32 30"><g stroke="#555" stroke-width="0.9" stroke-linejoin="round"><path d="M2,14 L19,9 L28,14 V23 L11,29 L2,22 Z" fill="url(#gg)"/><path d="M2,14 L11,19.5 L28,14 M11,19.5 V29" fill="none"/></g><path d="M1,5 C5,1.5 10,2 13,3 C17,4.5 20,4 24,1 L30,9 C26,13 21,13 18,11.5 C14,10 10,10 6,13 Z" fill="url(#gb)" stroke="#1f6d9e" stroke-width="0.9" stroke-linejoin="round"/></svg>
<svg style="left:8px;top:716px" width="30" height="30" viewBox="0 0 30 30"><path d="M1,6 C1,2 5,1 8,2 L13,7 H17 L22,2 C25,1 29,2 29,6 L26,11 V27 C26,28 25,28.5 24,28.5 H6 C5,28.5 4,28 4,27 V11 Z" fill="url(#ggv)" stroke="#444" stroke-width="1.1"/><path d="M8,2 L14.5,9 V28 M22,2 L15.5,9" fill="none" stroke="#2f86bb" stroke-width="1.5"/><path d="M12.5,12 l5,-2 M12.5,15.5 l5,-2 M12.5,19 l5,-2 M12.5,22.5 l5,-2 M12.5,26 l5,-2" stroke="#1f6d9e" stroke-width="1.4"/></svg>
<div class="abs" style="left:5px;top:751px;width:60px;height:1px;background:#9a9a9a"></div>
<svg style="left:6px;top:761px" width="32" height="28" viewBox="0 0 32 28"><path d="M1,10 C5,5 9,7 13,8.5 C17,10 20,6 24,3 L28,14 C24,19 20,19 17,18 C13,17 10,19 7,24 Z" fill="#ececec" stroke="#d0d0d0" stroke-width="1.1" stroke-linejoin="round"/></svg>
<svg style="left:6px;top:799px" width="32" height="28" viewBox="0 0 32 28"><path d="M1,10 C5,5 9,7 13,8.5 C17,10 20,6 24,3 L28,14 C24,19 20,19 17,18 C13,17 10,19 7,24 Z" fill="#ececec" stroke="#d0d0d0" stroke-width="1.1" stroke-linejoin="round"/></svg>
<svg style="left:6px;top:837px" width="32" height="28" viewBox="0 0 32 28"><path d="M1,10 C5,5 9,7 13,8.5 C17,10 20,6 24,3 L28,14 C24,19 20,19 17,18 C13,17 10,19 7,24 Z" fill="#ececec" stroke="#d0d0d0" stroke-width="1.1" stroke-linejoin="round"/></svg>
<svg style="left:6px;top:761px" width="32" height="30" viewBox="0 0 32 30"><path d="M20,18 L27,25 M28,20 V26 H22" fill="none" stroke="#cfcfcf" stroke-width="2"/></svg>
<svg style="left:9.5px;top:877px" width="25" height="27" viewBox="0 0 25 27"><g stroke="#555" stroke-width="0.9" stroke-linejoin="round"><path d="M0.8,5 L9,8.5 V26.5 L0.8,20.5 Z" fill="url(#gg)"/><path d="M9,15.5 H24 V21 L9,26.5 Z" fill="url(#gg)"/><path d="M0.8,5 L9.5,1 L20,1.6 C16,2.5 11.5,5 9,8.5 Z" fill="#fff"/></g><path d="M9,8.5 C11.5,5 16,2.5 20,1.6 C22.8,2.6 24,6 24,10 V15.5 H9 Z" fill="url(#gb)" stroke="#1f6d9e" stroke-width="0.9" stroke-linejoin="round"/><path d="M9.5,11.5 C13,8.5 18,7.5 23.5,8" fill="none" stroke="#bfe2f5" stroke-width="0.9"/></svg>
<svg style="left:7px;top:912px" width="28" height="30" viewBox="0 0 28 30"><circle cx="5.5" cy="5" r="4.3" fill="#3f93c6" stroke="#1f6d9e" stroke-width="0.8"/><path d="M10.5,11 L27,7 V20 L10.5,24 Z" fill="url(#gb)" stroke="#1f6d9e" stroke-width="0.9" stroke-linejoin="round"/><path d="M19,1 V7.5 M19,10.5 V19 M19,22.5 V29" stroke="#222" stroke-width="1"/></svg>
<div class="dd" style="left:53px;top:925px;border-top-color:#333"></div>
<svg style="left:27px;top:969px" width="12" height="14" viewBox="0 0 12 14"><path d="M1.5,1.5 L6,6 L10.5,1.5 M1.5,7 L6,11.5 L10.5,7" fill="none" stroke="#666" stroke-width="1.3"/></svg>
<div class="abs" style="left:0;top:990px;width:66px;height:1px;background:#b0b0b0"></div>
<!-- tree -->
<div class="abs" style="left:67px;top:244px;width:281px;height:1px;background:#d0d0d0"></div>
<div class="abs" style="left:67px;top:259px;width:281px;height:1px;background:#d0d0d0"></div>
<div class="abs" style="left:204px;top:249px;width:6px;height:6px;border-radius:3px;background:#d4d4d4;border:1px solid #9a9a9a"></div>
<div class="abs" style="left:67px;top:264px;width:52px;height:38px;background:#f6f6f6;border-top:1px solid #b8b8b8"></div>
<div class="abs" style="left:119px;top:301px;width:229px;height:1px;background:#b0b0b0"></div>
<div class="abs" style="left:119px;top:264px;width:52px;height:38px;background:#d6d6d6;border:1px solid #9c9c9c;border-left:1px solid #9c9c9c"></div>
<div class="abs" style="left:171px;top:264px;width:52px;height:38px;background:#d6d6d6;border:1px solid #9c9c9c;border-left:none"></div>
<div class="abs" style="left:223px;top:264px;width:52px;height:38px;background:#d6d6d6;border:1px solid #9c9c9c;border-left:none"></div>
<div class="abs" style="left:275px;top:264px;width:52px;height:38px;background:#d6d6d6;border:1px solid #9c9c9c;border-left:none"></div>
<svg style="left:80px;top:268px" width="28" height="29" viewBox="0 0 28 29"><g stroke="#a87400" stroke-width="0.9" stroke-linejoin="round"><path d="M3,6 L11,2 L17,5 L9,9.5 Z" fill="#ffe873"/><path d="M9,9.5 L17,5 V11 L9,15.5 Z" fill="#e9ac00"/><path d="M9,15.5 L17,11 L26,15.5 L18,20.5 Z" fill="#ffe873"/><path d="M18,20.5 L26,15.5 V22.5 L18,27.5 Z" fill="#e9ac00"/><path d="M3,6 L9,9.5 V15.5 L18,20.5 V27.5 L3,19.5 Z" fill="#ffd21f"/></g></svg>
<svg style="left:131px;top:270px" width="28" height="26" viewBox="0 0 28 26"><rect x="0.8" y="0.8" width="26.4" height="24" fill="#fafafa" stroke="#444" stroke-width="1.2"/><rect x="0.8" y="0.8" width="26.4" height="3.6" fill="#3f93c6" stroke="#1f6d9e" stroke-width="0.8"/><g fill="#3f93c6" stroke="#1f6d9e" stroke-width="0.7"><rect x="4" y="7.5" width="6" height="3.4"/><rect x="4" y="13" width="6" height="3.4"/><rect x="4" y="18.5" width="6" height="3.4"/></g><path d="M12.5,9.2 h11 M12.5,14.7 h11 M12.5,20.2 h11" stroke="#444" stroke-width="1"/></svg>
<svg style="left:186px;top:269px" width="24" height="28" viewBox="0 0 24 28"><path d="M2,1 V27 M2,1 H5 M2,27 H5 M2,9 H8 M2,21 H10" fill="none" stroke="#555" stroke-width="1.8"/><rect x="8" y="3" width="11" height="11" fill="url(#gg)" stroke="#444" stroke-width="1.1"/><rect x="11" y="15" width="11" height="11" fill="url(#gg)" stroke="#444" stroke-width="1.1"/></svg>
<svg style="left:235px;top:269px" width="28" height="28" viewBox="0 0 28 28"><circle cx="14" cy="14" r="9" fill="none" stroke="#222" stroke-width="2.2"/><path d="M14,0.5 V27.5 M0.5,14 H27.5" stroke="#222" stroke-width="1.6"/></svg>
<svg style="left:287px;top:268px" width="28" height="28" viewBox="0 0 28 28"><g transform="translate(14,14)"><clipPath id="cb1414"><circle r="13"/></clipPath><g clip-path="url(#cb1414)"><path d="M0,0 L-14.3,-3.9 L-13,-15.6 L2.6,-15.6 Z" fill="#1f55d6"/><path d="M0,0 L2.6,-15.6 L15.6,-15.6 L15.6,3.9 Z" fill="#d21f1f"/><path d="M0,0 L15.6,3.9 L15.6,15.6 L-2.6,15.6 Z" fill="#f0c010"/><path d="M0,0 L-2.6,15.6 L-15.6,15.6 L-14.3,-3.9 Z" fill="#27a030"/></g><circle r="13" fill="url(#gball)" stroke="#555" stroke-width="0.6"/></g><path d="M16,5 C20,1 27,6 26,13 C25,16 22,17 20,15 C17,12 15,8 16,5 Z" fill="#111"/><path d="M18,6 C20,5 23,8 23.5,12" fill="none" stroke="#a33" stroke-width="1.4"/></svg>
<svg style="left:338px;top:273px" width="10" height="18" viewBox="0 0 10 18"><path d="M1.5,1.5 L8.5,9.5 L1.5,17.5" fill="none" stroke="#7d7d7d" stroke-width="3"/></svg>
<div class="abs" style="left:70px;top:302px;width:277px;height:38px;background:#f7f7f7;border:1px solid #d2d2d2"></div>
<svg style="left:75px;top:308px" width="28" height="30" viewBox="0 0 28 30"><path d="M1,1.5 H27 V4.5 L16,15.5 V27 L12,24 V15.5 L1,4.5 Z" fill="url(#ggv)" stroke="#555" stroke-width="1"/><rect x="1" y="1.5" width="26" height="4" fill="#5aa9d6" stroke="#1f6d9e" stroke-width="0.7"/></svg>
<svg style="left:71px;top:342px" width="28" height="29" viewBox="0 0 28 29"><g stroke="#a87400" stroke-width="0.9" stroke-linejoin="round"><path d="M3,6 L11,2 L17,5 L9,9.5 Z" fill="#ffe873"/><path d="M9,9.5 L17,5 V11 L9,15.5 Z" fill="#e9ac00"/><path d="M9,15.5 L17,11 L26,15.5 L18,20.5 Z" fill="#ffe873"/><path d="M18,20.5 L26,15.5 V22.5 L18,27.5 Z" fill="#e9ac00"/><path d="M3,6 L9,9.5 V15.5 L18,20.5 V27.5 L3,19.5 Z" fill="#ffd21f"/></g></svg>
<div class="t tr" style="left:104.5px;top:344.5px;width:243.5px;overflow:hidden">零件1&nbsp;&nbsp;(預設<span style="letter-spacing:2.5px">&lt;&lt;</span>預設<span style="letter-spacing:2.5px">&gt;</span>_顯示狀態</div>
<div class="t tr" style="top:376px">歷程</div>
<svg style="left:79px;top:382px" width="8" height="12" viewBox="0 0 8 12"><path d="M1,0.5 L7,6 L1,11.5 Z" fill="#666"/></svg>
<svg style="left:104px;top:374px" width="30" height="27" viewBox="0 0 30 27"><path d="M1,24 V3 C1,2 1.8,1 3,1 H10 L12.5,4 H26 C27,4 28,5 28,6 V24 C28,25 27,26 26,26 H3 C2,26 1,25 1,24 Z" fill="url(#gfold)" stroke="#333" stroke-width="1.2"/><path d="M1,7.5 H28" stroke="#333" stroke-width="1"/><circle cx="16" cy="16.5" r="6.3" fill="#fff" stroke="#333" stroke-width="1.1"/><path d="M16,12.5 V16.5 H19.5" fill="none" stroke="#333" stroke-width="1.1"/><path d="M5.5,14.5 L11,14.5 L8.2,18.5 Z" fill="#2f86bb"/><path d="M8.5,15 C8.5,11.5 11,9.5 14,9.3" fill="none" stroke="#2f86bb" stroke-width="1.6"/></svg>
<div class="t tr" style="top:408px">感測器</div>
<svg style="left:104px;top:406px" width="30" height="27" viewBox="0 0 30 27"><path d="M1,24 V3 C1,2 1.8,1 3,1 H10 L12.5,4 H26 C27,4 28,5 28,6 V24 C28,25 27,26 26,26 H3 C2,26 1,25 1,24 Z" fill="url(#gfold)" stroke="#333" stroke-width="1.2"/><path d="M1,7.5 H28" stroke="#333" stroke-width="1"/><circle cx="15" cy="17" r="7" fill="#fff" stroke="#333" stroke-width="1.1"/><path d="M15,17 L19,12" stroke="#333" stroke-width="1.2"/><path d="M19,20.5 A5,5 0 0 0 20,16.5 L15,17 Z" fill="#d8281e"/><path d="M10,14 l1,0.6 M12.5,11.6 l0.5,1 M10,20 l1,-0.5" stroke="#555" stroke-width="0.8"/></svg>
<div class="t tr" style="top:440px">註記</div>
<svg style="left:79px;top:446px" width="8" height="12" viewBox="0 0 8 12"><path d="M1,0.5 L7,6 L1,11.5 Z" fill="#666"/></svg>
<svg style="left:104px;top:438px" width="30" height="27" viewBox="0 0 30 27"><path d="M1,24 V3 C1,2 1.8,1 3,1 H10 L12.5,4 H26 C27,4 28,5 28,6 V24 C28,25 27,26 26,26 H3 C2,26 1,25 1,24 Z" fill="url(#gfold)" stroke="#333" stroke-width="1.2"/><path d="M1,7.5 H28" stroke="#333" stroke-width="1"/><text x="14.5" y="25" text-anchor="middle" font-family="'Liberation Serif',serif" font-weight="700" font-size="21" fill="#5aa9d6" stroke="#1f6d9e" stroke-width="0.8">A</text></svg>
<div class="t tr" style="top:472px">材質 <span style="margin:0 2.5px 0 1.5px">&lt;</span>未指定<span style="margin-left:3px">&gt;</span></div>
<svg style="left:102px;top:469px" width="34" height="30" viewBox="0 0 34 30"><circle cx="5" cy="4.5" r="3.4" fill="#eee" stroke="#666" stroke-width="0.9"/><circle cx="5" cy="14.5" r="3.4" fill="#3f93c6" stroke="#1f6d9e" stroke-width="0.9"/><circle cx="5" cy="24" r="3.4" fill="#f2c21a" stroke="#a87f00" stroke-width="0.9"/><path d="M11,4.5 H29 M11,14 H29 M11,24 H18" stroke="#333" stroke-width="3"/><rect x="-2" y="-8.5" width="4" height="5" fill="#222" transform="translate(24,23) rotate(0)"/><rect x="-2" y="-8.5" width="4" height="5" fill="#222" transform="translate(24,23) rotate(45)"/><rect x="-2" y="-8.5" width="4" height="5" fill="#222" transform="translate(24,23) rotate(90)"/><rect x="-2" y="-8.5" width="4" height="5" fill="#222" transform="translate(24,23) rotate(135)"/><rect x="-2" y="-8.5" width="4" height="5" fill="#222" transform="translate(24,23) rotate(180)"/><rect x="-2" y="-8.5" width="4" height="5" fill="#222" transform="translate(24,23) rotate(225)"/><rect x="-2" y="-8.5" width="4" height="5" fill="#222" transform="translate(24,23) rotate(270)"/><rect x="-2" y="-8.5" width="4" height="5" fill="#222" transform="translate(24,23) rotate(315)"/><circle cx="24" cy="23" r="5.6" fill="#222"/><circle cx="24" cy="23" r="2.2" fill="#f6f6f6"/></svg>
<div class="t tr" style="top:504px">前基準面</div>
<svg style="left:109.5px;top:500px" width="22" height="32" viewBox="0 0 22 32"><path d="M1.5,8 L18,3 V22 L1.5,28 Z" fill="#fafafa" stroke="#333" stroke-width="1"/><path d="M9.5,0 V32" stroke="#111" stroke-width="1" stroke-dasharray="2.6 1.7"/></svg>
<div class="t tr" style="top:536px">上基準面</div>
<svg style="left:109.5px;top:532px" width="22" height="32" viewBox="0 0 22 32"><path d="M1.5,8 L18,3 V22 L1.5,28 Z" fill="#fafafa" stroke="#333" stroke-width="1"/><path d="M9.5,0 V32" stroke="#111" stroke-width="1" stroke-dasharray="2.6 1.7"/></svg>
<div class="t tr" style="top:568px">右基準面</div>
<svg style="left:109.5px;top:564px" width="22" height="32" viewBox="0 0 22 32"><path d="M1.5,8 L18,3 V22 L1.5,28 Z" fill="#fafafa" stroke="#333" stroke-width="1"/><path d="M9.5,0 V32" stroke="#111" stroke-width="1" stroke-dasharray="2.6 1.7"/></svg>
<div class="t tr" style="top:600px">原點</div>
<svg style="left:104px;top:598px" width="30" height="28" viewBox="0 0 30 28"><path d="M5,24 V5 M5,24 H24" stroke="#111" stroke-width="1.6"/><path d="M5,0.5 L8.5,6.5 H1.5 Z M29,24 L23,20.5 V27.5 Z" fill="#111"/><rect x="2.5" y="21.5" width="5" height="5" fill="#111"/></svg>
<div class="t tr" style="top:632px">填料<span style="margin:0 1.4px">-</span>伸長1</div>
<svg style="left:79px;top:638px" width="8" height="12" viewBox="0 0 8 12"><path d="M1,0.5 L7,6 L1,11.5 Z" fill="#666"/></svg>
<svg style="left:103.5px;top:629.5px" width="30" height="28" viewBox="0 0 30 28"><g stroke="#555" stroke-width="0.9" stroke-linejoin="round"><path d="M12.5,3 L17.6,0.6 L28.9,6.5 L22.7,8.5 Z" fill="#fff"/><path d="M22.7,8.5 L28.9,6.5 V25.2 L22.7,28 Z" fill="url(#ggv)"/><path d="M12.5,3 L22.7,8.5 V28 L12.5,21.5 Z" fill="#d9d9d9"/></g><g stroke="#17587f" stroke-width="1" stroke-linejoin="round"><path d="M1.2,11.2 L14.5,8 L19.5,10 L5.5,14.3 Z" fill="#8ccbee"/><path d="M1.2,11.2 L5.5,14.3 V24 L1.2,20.5 Z" fill="#2f86bb"/><path d="M5.5,14.3 L19.5,10 V19.75 L5.5,24 Z" fill="url(#gb)"/></g></svg>
<div class="t tr" style="top:664px">填料<span style="margin:0 1.4px">-</span>伸長2</div>
<svg style="left:79px;top:670px" width="8" height="12" viewBox="0 0 8 12"><path d="M1,0.5 L7,6 L1,11.5 Z" fill="#666"/></svg>
<svg style="left:103.5px;top:661.5px" width="30" height="28" viewBox="0 0 30 28"><g stroke="#555" stroke-width="0.9" stroke-linejoin="round"><path d="M12.5,3 L17.6,0.6 L28.9,6.5 L22.7,8.5 Z" fill="#fff"/><path d="M22.7,8.5 L28.9,6.5 V25.2 L22.7,28 Z" fill="url(#ggv)"/><path d="M12.5,3 L22.7,8.5 V28 L12.5,21.5 Z" fill="#d9d9d9"/></g><g stroke="#17587f" stroke-width="1" stroke-linejoin="round"><path d="M1.2,11.2 L14.5,8 L19.5,10 L5.5,14.3 Z" fill="#8ccbee"/><path d="M1.2,11.2 L5.5,14.3 V24 L1.2,20.5 Z" fill="#2f86bb"/><path d="M5.5,14.3 L19.5,10 V19.75 L5.5,24 Z" fill="url(#gb)"/></g></svg>
<div class="t tr" style="top:696px">除料<span style="margin:0 1.4px">-</span>伸長1</div>
<svg style="left:79px;top:702px" width="8" height="12" viewBox="0 0 8 12"><path d="M1,0.5 L7,6 L1,11.5 Z" fill="#666"/></svg>
<div class="abs" style="left:107px;top:694.0px;width:24px;height:28px;transform:scale(0.93);transform-origin:0 0"><svg style="left:0px;top:0px" width="24" height="28" viewBox="0 0 24 28"><g stroke="#555" stroke-width="0.9" stroke-linejoin="round"><path d="M1.6,4.3 L19.5,1 L23.5,2.5 L5.8,6.5 Z" fill="#fff"/><path d="M1.6,4.3 L5.8,6.5 V27 L1.6,23.5 Z" fill="#cfcfcf"/><path d="M5.8,6.5 L23.5,2.5 V22.5 L5.8,27 Z" fill="url(#gg)"/></g><path d="M9.1,9.8 L17.5,7.9 V17.3 L9.1,19.3 Z" fill="#f4f4f4"/><path d="M17.5,7.9 L20.3,7.3 V18.8 L17.5,17.3 Z" fill="#2f86bb"/><path d="M9.1,19.3 L17.5,17.3 L20.3,18.8 L9.1,21.5 Z" fill="#8ccbee"/><path d="M9.1,9.8 L20.3,7.3 V18.8 L9.1,21.5 Z" fill="none" stroke="#17587f" stroke-width="1" stroke-linejoin="round"/></svg></div>
<div class="t tr" style="top:728px">填料<span style="margin:0 1.4px">-</span>伸長3</div>
<svg style="left:79px;top:734px" width="8" height="12" viewBox="0 0 8 12"><path d="M1,0.5 L7,6 L1,11.5 Z" fill="#666"/></svg>
<svg style="left:103.5px;top:725.5px" width="30" height="28" viewBox="0 0 30 28"><g stroke="#555" stroke-width="0.9" stroke-linejoin="round"><path d="M12.5,3 L17.6,0.6 L28.9,6.5 L22.7,8.5 Z" fill="#fff"/><path d="M22.7,8.5 L28.9,6.5 V25.2 L22.7,28 Z" fill="url(#ggv)"/><path d="M12.5,3 L22.7,8.5 V28 L12.5,21.5 Z" fill="#d9d9d9"/></g><g stroke="#17587f" stroke-width="1" stroke-linejoin="round"><path d="M1.2,11.2 L14.5,8 L19.5,10 L5.5,14.3 Z" fill="#8ccbee"/><path d="M1.2,11.2 L5.5,14.3 V24 L1.2,20.5 Z" fill="#2f86bb"/><path d="M5.5,14.3 L19.5,10 V19.75 L5.5,24 Z" fill="url(#gb)"/></g></svg>
<div class="t tr" style="top:760px">除料<span style="margin:0 1.4px">-</span>伸長2</div>
<svg style="left:79px;top:766px" width="8" height="12" viewBox="0 0 8 12"><path d="M1,0.5 L7,6 L1,11.5 Z" fill="#666"/></svg>
<div class="abs" style="left:107px;top:758.0px;width:24px;height:28px;transform:scale(0.93);transform-origin:0 0"><svg style="left:0px;top:0px" width="24" height="28" viewBox="0 0 24 28"><g stroke="#555" stroke-width="0.9" stroke-linejoin="round"><path d="M1.6,4.3 L19.5,1 L23.5,2.5 L5.8,6.5 Z" fill="#fff"/><path d="M1.6,4.3 L5.8,6.5 V27 L1.6,23.5 Z" fill="#cfcfcf"/><path d="M5.8,6.5 L23.5,2.5 V22.5 L5.8,27 Z" fill="url(#gg)"/></g><path d="M9.1,9.8 L17.5,7.9 V17.3 L9.1,19.3 Z" fill="#f4f4f4"/><path d="M17.5,7.9 L20.3,7.3 V18.8 L17.5,17.3 Z" fill="#2f86bb"/><path d="M9.1,19.3 L17.5,17.3 L20.3,18.8 L9.1,21.5 Z" fill="#8ccbee"/><path d="M9.1,9.8 L20.3,7.3 V18.8 L9.1,21.5 Z" fill="none" stroke="#17587f" stroke-width="1" stroke-linejoin="round"/></svg></div>
<div class="abs" style="left:67px;top:788.2px;width:281px;height:2px;background:#1f45b5"></div>
<div class="abs" style="left:67px;top:943px;width:281px;height:25px;background:#f0f0f0"></div>
<div class="abs" style="left:92px;top:943px;width:202px;height:25px;background:#cdcdcd"></div>
<svg style="left:73px;top:947px" width="12" height="16" viewBox="0 0 12 16"><path d="M9,2 L3,8 L9,14" fill="none" stroke="#555" stroke-width="2.2"/></svg>
<svg style="left:330px;top:947px" width="12" height="16" viewBox="0 0 12 16"><path d="M3,2 L9,8 L3,14" fill="none" stroke="#555" stroke-width="2.2"/></svg>
<div class="abs" style="left:348px;top:242px;width:2px;height:726px;background:#f6f6f6"></div>
<!-- bottom -->
<div class="abs" style="left:66px;top:968px;width:1854px;height:26px;background:#f6f6f6"></div>
<div class="abs" style="left:350px;top:968px;width:1570px;height:1px;background:#8e8e92"></div>
<div class="abs" style="left:66.5px;top:968px;width:1.5px;height:25px;background:#9fb4b8"></div>
<div class="abs" style="left:94px;top:968.5px;width:97px;height:24.5px;background:#a3a3bd;border-top:2px solid #4a4a5e"></div>
<div class="abs" style="left:95px;top:971px;width:23px;height:21px;border:1px solid #8c8ca6"></div>
<div class="abs" style="left:119px;top:971px;width:23px;height:21px;border:1px solid #8c8ca6"></div>
<div class="abs" style="left:143px;top:971px;width:23px;height:21px;border:1px solid #8c8ca6"></div>
<div class="abs" style="left:167px;top:971px;width:23px;height:21px;border:1px solid #8c8ca6"></div>
<svg style="left:95px;top:971px" width="23" height="21" viewBox="0 0 23 21"><path d="M6,4 V17" stroke="#8a8aa2" stroke-width="2"/><path d="M16,4 V17 L8,10.5 Z" fill="#8a8aa2"/></svg>
<svg style="left:119px;top:971px" width="23" height="21" viewBox="0 0 23 21"><path d="M15,4 V17 L7,10.5 Z" fill="#8a8aa2"/></svg>
<svg style="left:143px;top:971px" width="23" height="21" viewBox="0 0 23 21"><path d="M8,4 V17 L16,10.5 Z" fill="#8a8aa2"/></svg>
<svg style="left:167px;top:971px" width="23" height="21" viewBox="0 0 23 21"><path d="M17,4 V17" stroke="#8a8aa2" stroke-width="2"/><path d="M7,4 V17 L15,10.5 Z" fill="#8a8aa2"/></svg>
<div class="t" style="left:210px;top:969px;font-size:19px;color:#444">模型</div>
<div class="abs" style="left:261px;top:968px;width:91px;height:26px;background:#d9d9d9;border:1px solid #8e8e92"></div>
<div class="abs" style="left:351px;top:968px;width:128px;height:26px;background:#d9d9d9;border:1px solid #8e8e92"></div>
<div class="t" style="left:272px;top:969px;font-size:19px">3D 視圖</div>
<div class="t" style="left:362px;top:969px;font-size:19px;letter-spacing:0.6px">動作研究 1</div>
<div class="abs" style="left:0;top:993px;width:1920px;height:1px;background:#9a9a9a"></div>
<div class="abs" style="left:0;top:994px;width:1920px;height:26px;background:#f8f8f8"></div>
<div class="t" style="left:0.5px;top:995.5px;font-size:18.5px">SOLIDWORKS Premium 2016 x64 Edition</div>
<div class="abs" style="left:1553px;top:995px;width:1px;height:23px;background:#d2d2d2"></div>
<div class="abs" style="left:1560px;top:995px;width:1px;height:23px;background:#d2d2d2"></div>
<div class="abs" style="left:1702px;top:995px;width:1px;height:23px;background:#d2d2d2"></div>
<div class="abs" style="left:1717px;top:995px;width:1px;height:23px;background:#d2d2d2"></div>
<div class="t" style="left:1564.5px;top:995px;font-size:18px">正在編輯： 零件</div>
<div class="t" style="left:1743px;top:995px;font-size:18px">MMGS</div>
<div class="abs" style="left:1812px;top:1005px;width:0;height:0;border-left:3px solid transparent;border-right:3px solid transparent;border-bottom:4px solid #333"></div>
<svg style="left:1886px;top:994px" width="30" height="26" viewBox="0 0 30 26"><path d="M2,10 L14,1 L29,14 L20,25 Z" fill="#ececec" stroke="#666" stroke-width="1.1"/><circle cx="7" cy="9" r="1.6" fill="#fff" stroke="#666" stroke-width="0.8"/><path d="M11,9 L19,17 M14,7 L22,15 M17,5 L25,13" stroke="#555" stroke-width="1.3"/></svg>
<div id="taskbar" class="abs"></div>
<div class="abs" style="left:596px;top:1020px;width:73px;height:60px;background:#a56230"></div>
<div class="abs" style="left:596px;top:1077px;width:73px;height:3px;background:#ff7d00"></div>
<div class="abs" style="left:1121px;top:1020px;width:74px;height:60px;background:#485170"></div>
<div class="abs" style="left:227px;top:1077px;width:61px;height:3px;background:#76b9ed"></div>
<div class="abs" style="left:377px;top:1077px;width:61px;height:3px;background:#76b9ed"></div>
<div class="abs" style="left:1121px;top:1077px;width:74px;height:3px;background:#76b9ed"></div>
<svg style="left:23px;top:1037px" width="26" height="26" viewBox="0 0 26 26"><path d="M0.8,4.5 L10.6,3 V12.2 H0.8 Z M12,2.8 L25.2,0.8 V12.2 H12 Z M0.8,13.6 H10.6 V22.8 L0.8,21.4 Z M12,13.6 H25.2 V25 L12,23 Z" fill="#fff"/></svg>
<svg style="left:95px;top:1036px" width="28" height="28" viewBox="0 0 28 28"><circle cx="16.5" cy="10.5" r="8" fill="none" stroke="#fff" stroke-width="1.6"/><path d="M11,17 L1.5,26" stroke="#fff" stroke-width="1.8"/></svg>
<svg style="left:166px;top:1037px" width="28" height="26" viewBox="0 0 28 26"><path d="M2,1 V3 M18,1 V3 M2,23 V25 M18,23 V25" stroke="#fff" stroke-width="1.4"/><path d="M1.5,2.5 H18.5 M1.5,23.5 H18.5" stroke="#fff" stroke-width="1.4"/><rect x="2" y="7" width="16" height="12" fill="none" stroke="#fff" stroke-width="1.4"/><path d="M24.5,1 V25" stroke="#fff" stroke-width="1.4"/><rect x="22.5" y="8" width="4" height="4" fill="#fff"/></svg>
<svg style="left:239px;top:1032px" width="40" height="40" viewBox="0 0 40 40"><clipPath id="chc"><circle cx="17" cy="17" r="16"/></clipPath><g clip-path="url(#chc)"><rect width="34" height="34" fill="#db4437"/><path d="M17,17 L-2,6 L-2,36 L12,36 Z" fill="#0f9d58"/><path d="M17,17 L12,36 L36,36 L36,10 L17,10 Z" fill="#ffcd40"/></g><circle cx="17" cy="17" r="7.6" fill="#fff"/><circle cx="17" cy="17" r="6" fill="#4285f4"/><circle cx="27.5" cy="28" r="11.5" fill="#1c1a1a"/><circle cx="27" cy="27" r="5" fill="#7a6448"/><path d="M22,32 C24,27 31,27 33,33 L30,37 L24,37 Z" fill="#5d4a36"/><circle cx="29.5" cy="24" r="2.6" fill="#a58b66"/></svg>
<svg style="left:314px;top:1031px" width="38" height="38" viewBox="0 0 38 38"><defs><linearGradient id="edg1" x1="0" y1="0" x2="1" y2="1"><stop offset="0" stop-color="#35c1f1"/><stop offset="0.6" stop-color="#2f9de0"/><stop offset="1" stop-color="#1b6fc4"/></linearGradient><linearGradient id="edg2" x1="0" y1="0" x2="1" y2="0"><stop offset="0" stop-color="#2cc1d8"/><stop offset="1" stop-color="#6fdc5a"/></linearGradient></defs><circle cx="18.5" cy="19" r="18" fill="url(#edg1)"/><path d="M1.5,14 C4,5 11,1 18.5,1 C28,1 36,8 36.5,17 C36.5,23 32,26 27,26 C23,26 21,24.5 22.5,22.5 C25,19 22,14 17,14 C10,14 6,19 6.5,26 C3,23 0.5,19 1.5,14 Z" fill="url(#edg2)"/><path d="M6.5,26 C6,19 10,14 17,14 C13,16 12,21 14,25.5 C16.5,31 23,33.5 30,31.5 C26,36 19,38 13,35 C9,33 7,30 6.5,26 Z" fill="#155fae"/></svg>
<svg style="left:390px;top:1036px" width="34" height="28" viewBox="0 0 34 28"><path d="M1,3 C1,2 1.8,1 3,1 H12 L15,4 H31 C32,4 33,5 33,6 V25 H1 Z" fill="#f5b62b"/><path d="M1,8 H33 V25.5 C33,26.3 32.3,27 31.5,27 H2.5 C1.7,27 1,26.3 1,25.5 Z" fill="#ffd766"/><path d="M9,27 V17 C9,16 9.6,15.5 10.5,15.5 H23.5 C24.4,15.5 25,16 25,17 V27 H21 V19.5 H13 V27 Z" fill="#3f8fd6"/></svg>
<svg style="left:463px;top:1032px" width="35" height="34" viewBox="0 0 35 34"><defs><linearGradient id="xlg" x1="0" y1="0" x2="1" y2="1"><stop offset="0" stop-color="#e8f5e0"/><stop offset="1" stop-color="#5fae4a"/></linearGradient></defs><path d="M1,2 H28 L33,7 V33 H1 Z" fill="url(#xlg)" stroke="#2f7d32" stroke-width="1"/><text x="3" y="25" font-family="'Liberation Sans',sans-serif" font-weight="700" font-size="26" fill="#1f7a2c">X</text><path d="M10,22 L33,17 L34,30 L12,33 Z" fill="#f7fbf5" stroke="#9bc79a" stroke-width="0.7"/><path d="M12,26 L33,21.5 M12,29.5 L33.5,25.5 M20,20 L21.5,32 M27,18.5 L28.5,31" stroke="#9bc79a" stroke-width="0.8"/></svg>
<svg style="left:538px;top:1032px" width="35" height="34" viewBox="0 0 35 34"><defs><linearGradient id="ppg" x1="0" y1="0" x2="1" y2="1"><stop offset="0" stop-color="#fdeee4"/><stop offset="1" stop-color="#e8662a"/></linearGradient></defs><path d="M1,2 H28 L33,7 V33 H1 Z" fill="url(#ppg)" stroke="#c9501c" stroke-width="1"/><text x="5" y="25" font-family="'Liberation Sans',sans-serif" font-weight="700" font-size="26" fill="#d4511b">P</text><path d="M12,22 L33,18 L34,30 L14,33 Z" fill="#fdf5f0" stroke="#e5a88a" stroke-width="0.7"/><ellipse cx="24" cy="23" rx="4.5" ry="3" fill="#e8662a" transform="rotate(-10 24 23)"/><path d="M16,28.5 L30,26 M16.5,31 L26,29.3" stroke="#e5a88a" stroke-width="0.9"/></svg>
<svg style="left:614px;top:1033px" width="34" height="34" viewBox="0 0 34 34"><circle cx="17" cy="17" r="16.5" fill="#1ed760"/><path d="M8,11.5 C14,9.5 22,10 27,13" fill="none" stroke="#1b1b1b" stroke-width="3" stroke-linecap="round"/><path d="M9,17 C14,15.5 20.5,16 25,18.5" fill="none" stroke="#1b1b1b" stroke-width="2.5" stroke-linecap="round"/><path d="M10,22 C14,21 19,21.3 23,23.5" fill="none" stroke="#1b1b1b" stroke-width="2.1" stroke-linecap="round"/></svg>
<svg style="left:688px;top:1031px" width="37" height="37" viewBox="0 0 37 37"><path d="M2,7.75 L18.25,1 L34.5,7.75 V27.75 L18.25,36 L2,27.75 Z" fill="#b5151d"/><path d="M2,7.75 L18.25,14.5 L34.5,7.75 L18.25,1 Z" fill="#dc3a42"/><path d="M18.25,14.5 V36 L34.5,27.75 V7.75 Z" fill="#86101a"/><text x="4" y="27" font-family="'Liberation Sans',sans-serif" font-weight="700" font-size="25" fill="#fff" textLength="11.5" lengthAdjust="spacingAndGlyphs">S</text><text x="17.5" y="27" font-family="'Liberation Sans',sans-serif" font-weight="700" font-size="25" fill="#fff" textLength="17" lengthAdjust="spacingAndGlyphs">W</text><text x="16.5" y="35" font-family="'Liberation Sans',sans-serif" font-weight="700" font-size="9.5" fill="#fff" stroke="#1b2845" stroke-width="0.25" textLength="19" lengthAdjust="spacingAndGlyphs">2016</text></svg>
<svg style="left:764px;top:1032px" width="36" height="36" viewBox="0 0 36 36"><rect width="36" height="36" fill="#f6e4e1"/><path d="M7,27 L16,5 H22 L29,27 H23.5 L18.5,10 L12.5,27 Z" fill="#c4202c"/><path d="M10,21 L25,17 L26.5,21 L9,25 Z" fill="#a0141e"/><path d="M16,5 H22 L20,9 Z" fill="#e34a52"/><text x="25" y="33.5" font-family="'Liberation Sans',sans-serif" font-weight="700" font-style="italic" font-size="7.5" fill="#c4202c">LT</text></svg>
<svg style="left:838px;top:1032px" width="35" height="34" viewBox="0 0 35 34"><defs><linearGradient id="wdg" x1="0" y1="0" x2="1" y2="1"><stop offset="0" stop-color="#eaf1fb"/><stop offset="1" stop-color="#3a78cf"/></linearGradient></defs><path d="M1,2 H28 L33,7 V33 H1 Z" fill="url(#wdg)" stroke="#2a5fb0" stroke-width="1"/><text x="2" y="25" font-family="'Liberation Sans',sans-serif" font-weight="700" font-size="25" fill="#1d55b5" textLength="24" lengthAdjust="spacingAndGlyphs">W</text><path d="M12,23 L33,18.5 L34,30 L14,33 Z" fill="#f5f8fd" stroke="#9db8e3" stroke-width="0.7"/><path d="M15,27 L31,23.5 M15.5,30 L31.5,26.5" stroke="#9db8e3" stroke-width="0.9"/></svg>
<svg style="left:915px;top:1033px" width="33" height="32" viewBox="0 0 33 32"><rect x="1" y="1" width="31" height="30" fill="#2a1203" stroke="#ff8a12" stroke-width="2"/><text x="16.5" y="24" text-anchor="middle" font-family="'Liberation Sans',sans-serif" font-weight="700" font-size="20" fill="#ff8a12">Ai</text></svg>
<svg style="left:988px;top:1032px" width="38" height="36" viewBox="0 0 38 36"><path d="M3,22 C1,14 7,7 17,6.5 C26,6 31,11 30,16 C29,19 25,18.5 23.5,21 C22.5,23 25,25 23,28.5 C20,32.5 6,32 3,22 Z" fill="#dfeaf5" stroke="#8aa6c4" stroke-width="1"/><circle cx="9" cy="19" r="2.4" fill="#3aa64a"/><circle cx="13.5" cy="13" r="2.4" fill="#e8b923"/><circle cx="20.5" cy="11.5" r="2.4" fill="#e0442e"/><circle cx="10.5" cy="25.5" r="2.2" fill="#3a7bd5"/><path d="M19,33 L30,9 L32,10 L21,33.5 Z" fill="#e8902a"/><path d="M30,9 C30,5 32,2 35,1 C35.5,4.5 34,8 32,10 Z" fill="#f0c27a" stroke="#b8863a" stroke-width="0.6"/></svg>
<svg style="left:1063px;top:1032px" width="38" height="38" viewBox="0 0 38 38"><circle cx="19" cy="19" r="14.5" fill="none" stroke="#3fae2a" stroke-width="6.5"/><circle cx="19" cy="19" r="14.5" fill="none" stroke="#1b2845" stroke-width="1.4" stroke-dasharray="3 3.2" transform="rotate(10 19 19)" opacity="0.55" pathLength="91" stroke-dashoffset="0" style="clip-path:inset(0 50% 0 0)"/></svg>
<svg style="left:1138px;top:1031px" width="37" height="37" viewBox="0 0 37 37"><path d="M2,7.75 L18.25,1 L34.5,7.75 V27.75 L18.25,36 L2,27.75 Z" fill="#b5151d"/><path d="M2,7.75 L18.25,14.5 L34.5,7.75 L18.25,1 Z" fill="#dc3a42"/><path d="M18.25,14.5 V36 L34.5,27.75 V7.75 Z" fill="#86101a"/><text x="4" y="27" font-family="'Liberation Sans',sans-serif" font-weight="700" font-size="25" fill="#fff" textLength="11.5" lengthAdjust="spacingAndGlyphs">S</text><text x="17.5" y="27" font-family="'Liberation Sans',sans-serif" font-weight="700" font-size="25" fill="#fff" textLength="17" lengthAdjust="spacingAndGlyphs">W</text><text x="16.5" y="35" font-family="'Liberation Sans',sans-serif" font-weight="700" font-size="9.5" fill="#fff" stroke="#1b2845" stroke-width="0.25" textLength="19" lengthAdjust="spacingAndGlyphs">2016</text></svg>
<svg style="left:1511px;top:1043px" width="20" height="12" viewBox="0 0 20 12"><path d="M1.5,10.5 L10,2 L18.5,10.5" fill="none" stroke="#fff" stroke-width="1.5"/></svg>
<svg style="left:1548px;top:1038px" width="20" height="24" viewBox="0 0 20 24"><rect x="2" y="7" width="11" height="10.5" rx="2" fill="none" stroke="#fff" stroke-width="1.3"/><path d="M13,11 L17.5,8.5 V16 L13,13.5" fill="none" stroke="#fff" stroke-width="1.2"/><path d="M3,4 C6,1.5 11,1.5 14,4 M3,20.5 C6,23 11,23 14,20.5" fill="none" stroke="#fff" stroke-width="1"/></svg>
<svg style="left:1580px;top:1040px" width="26" height="18" viewBox="0 0 26 18"><rect x="6.5" y="5" width="17" height="10" fill="none" stroke="#fff" stroke-width="1.3"/><rect x="8" y="6.5" width="14" height="7" fill="#fff"/><rect x="23.5" y="8" width="1.8" height="4" fill="#fff"/><path d="M2,1 V4 M5,1 V4 M0.8,4 H6.2 V6.5 C6.2,8 5,8.5 3.5,8.5 C2,8.5 0.8,8 0.8,6.5 Z M3.5,8.5 V12 H6.5" fill="none" stroke="#fff" stroke-width="1.1"/></svg>
<svg style="left:1617px;top:1040px" width="26" height="20" viewBox="0 0 26 20"><path d="M1.5,7 H5 L10.5,2 V18 L5,13 H1.5 Z" fill="none" stroke="#fff" stroke-width="1.3" stroke-linejoin="round"/><path d="M13.5,7 C15,8.8 15,11.2 13.5,13" fill="none" stroke="#fff" stroke-width="1.2"/><path d="M16.5,4.5 C19,7.5 19,12.5 16.5,15.5" fill="none" stroke="#aab" stroke-width="1.1"/><path d="M19.5,2.5 C23,6.5 23,13.5 19.5,17.5" fill="none" stroke="#778" stroke-width="1"/></svg>
<div class="t" style="left:1651px;top:1038px;font-size:23px;color:#fff">英</div>
<div class="abs" style="left:1695px;top:1039px;width:23px;height:22px;background:#fff"></div>
<div class="t" style="left:1695px;top:1038px;width:23px;text-align:center;font-size:17px;color:#1b2845;font-weight:500">ㄅ</div>
<div class="t" style="left:1745px;top:1024px;font-size:18px;color:#fff;letter-spacing:-0.3px">下午 12:01</div>
<div class="t" style="left:1745px;top:1051px;font-size:18px;color:#fff;letter-spacing:0.55px">2021/1/14</div>
<svg style="left:1857px;top:1037px" width="26" height="28" viewBox="0 0 26 28"><path d="M1,1 H24 V19 H9 L5,23 V19 H1 Z" fill="#fff"/><path d="M4.5,6 H20.5 M4.5,10 H20.5 M4.5,14 H15" stroke="#1b2845" stroke-width="1.3"/><circle cx="20" cy="19" r="5.2" fill="#1b2845" stroke="#fff" stroke-width="1.2"/><path d="M20,15 A4,4 0 0 0 24,19 A5,5 0 0 1 20,15 Z" fill="#fff"/></svg>
<div class="abs" style="left:1912px;top:1020px;width:1px;height:60px;background:#7d869b"></div>
</body>
</html>
